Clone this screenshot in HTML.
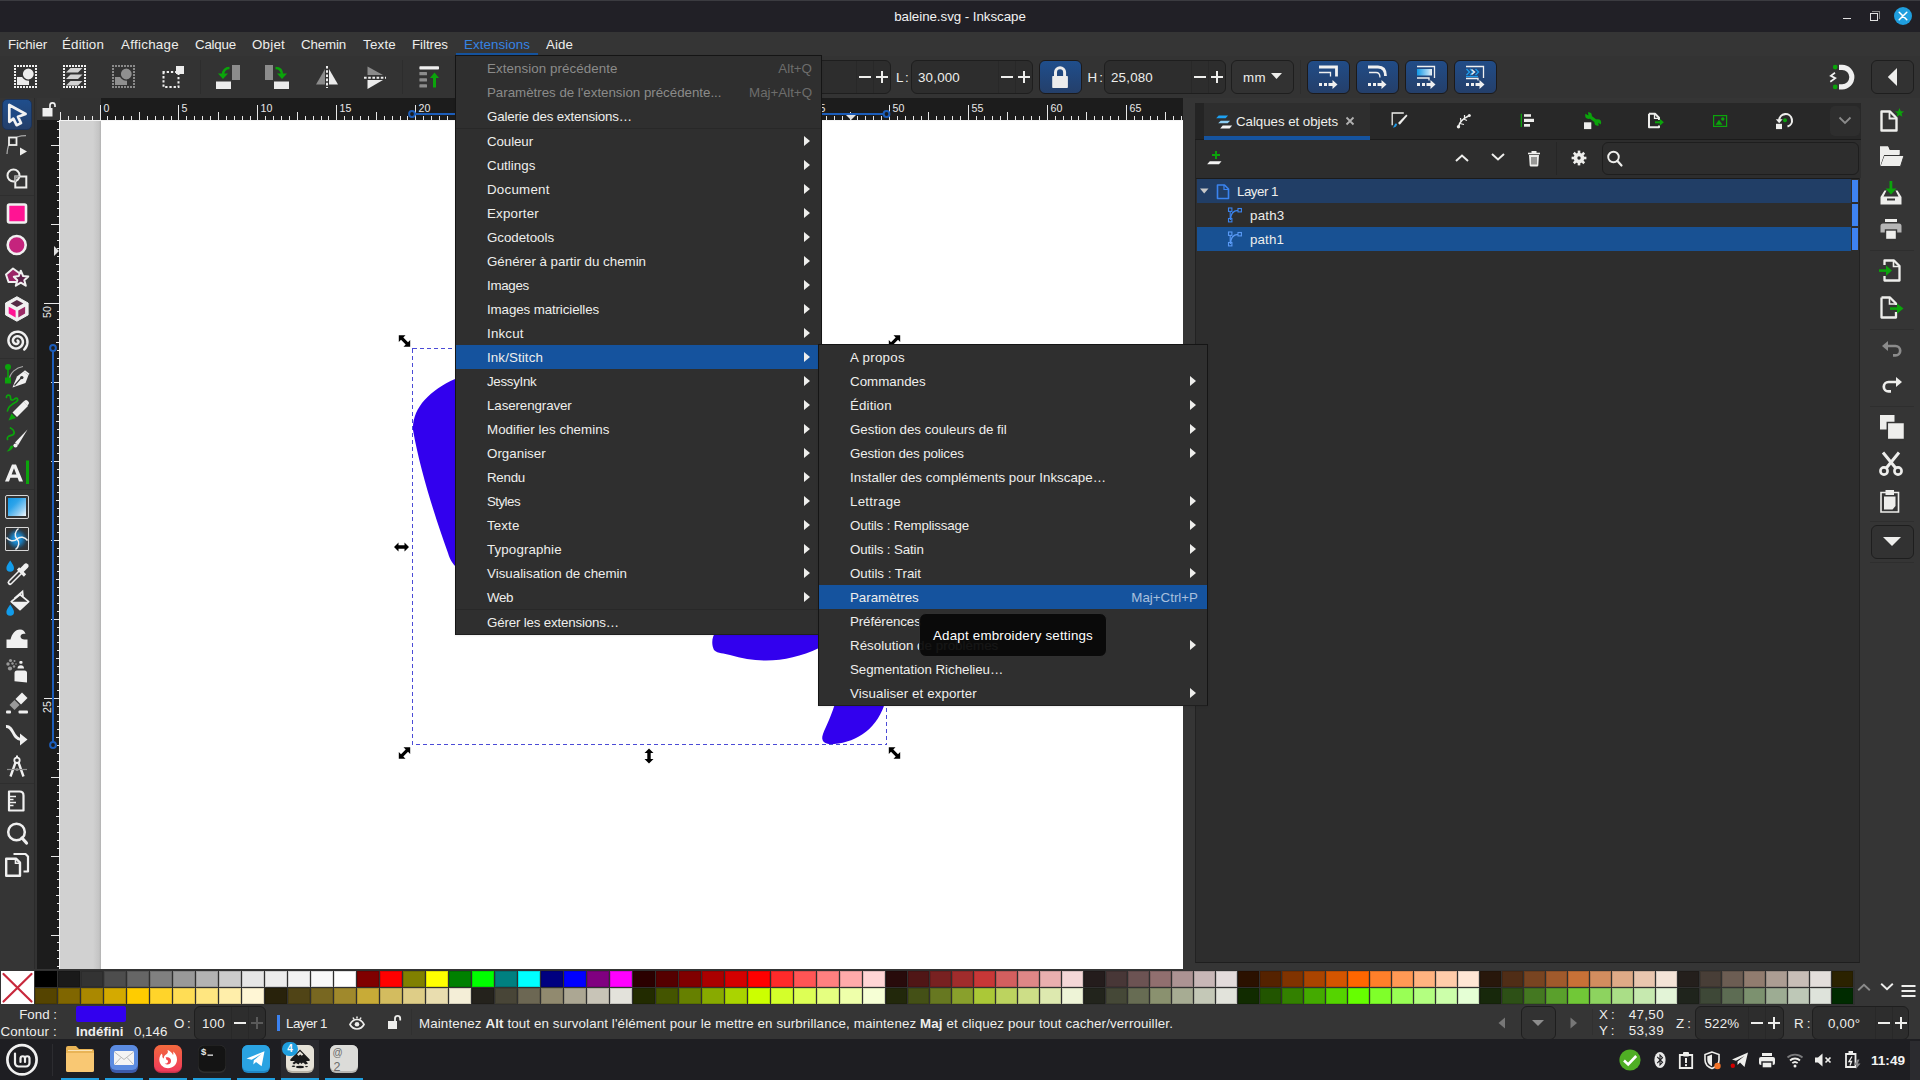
<!DOCTYPE html>
<html><head><meta charset="utf-8"><title>Inkscape</title><style>
*{box-sizing:border-box;margin:0;padding:0}
html,body{width:1920px;height:1080px;overflow:hidden;background:#353535}
body{font-family:"Liberation Sans",sans-serif;font-size:13.33px;color:#eeeeec;position:relative}
.a{position:absolute}
.t{position:absolute;white-space:nowrap;line-height:16px;height:16px;margin-top:1px}
svg{position:absolute;overflow:visible}
.mi{position:absolute;left:0;right:0;height:24px}
.mi .l{position:absolute;left:31px;top:5px;line-height:16px;white-space:nowrap}
.mi .k{position:absolute;right:9px;top:5px;line-height:16px;white-space:nowrap;color:#9a9a99}
.mi .ar{position:absolute;right:11px;top:6.500px;width:0;height:0;border-left:6px solid #eeeeec;border-top:5.500px solid transparent;border-bottom:5.500px solid transparent}
.dis .l{color:#8b8b8a}
.dis .k{color:#6d6d6c}
.sel{background:#15539e}
.sel .k{color:#a9c0dd}
.entry{position:absolute;background:#2d2d2d;border:1px solid #1e1e1e;border-radius:6px}
</style></head><body><div class="a" style="left:0;top:0;width:1920px;height:32px;background:#212026"></div><div class="a" style="left:0;top:0;width:1920px;height:1px;background:#3b3b40"></div><div class="t" style="left:760px;width:400px;text-align:center;top:8px;color:#f2f2f2;letter-spacing:-0.05px">baleine.svg - Inkscape</div><div class="a" style="left:1843px;top:18px;width:8px;height:1px;background:#e0e0e0"></div><div class="a" style="left:1872px;top:11px;width:8px;height:8px;border-top:1px solid #8a8a8a;border-right:1px solid #8a8a8a"></div><div class="a" style="left:1870px;top:13px;width:8px;height:8px;border:1px solid #e0e0e0"></div><div class="a" style="left:1894px;top:7px;width:18px;height:18px;border-radius:9px;background:#1f9ede"></div><svg style="left:1894px;top:7px" width="18" height="18"><path d="M5.200 5.200L12.800 12.800M12.800 5.200L5.200 12.800" stroke="#fff" stroke-width="1.500" stroke-linecap="round"></path></svg><div class="a" style="left:0;top:32px;width:1920px;height:24px;background:#353535"></div><div class="t" style="left: 8px; top: 36px; color: rgb(238, 238, 236); letter-spacing: -0.143px;">Fichier</div><div class="t" style="left: 62px; top: 36px; color: rgb(238, 238, 236); letter-spacing: 0.176px;">Édition</div><div class="t" style="left: 121px; top: 36px; color: rgb(238, 238, 236); letter-spacing: 0.295px;">Affichage</div><div class="t" style="left: 195px; top: 36px; color: rgb(238, 238, 236); letter-spacing: -0.208px;">Calque</div><div class="t" style="left: 252px; top: 36px; color: rgb(238, 238, 236); letter-spacing: 0.228px;">Objet</div><div class="t" style="left: 301px; top: 36px; color: rgb(238, 238, 236); letter-spacing: -0.156px;">Chemin</div><div class="t" style="left: 363px; top: 36px; color: rgb(238, 238, 236); letter-spacing: 0.228px;">Texte</div><div class="t" style="left: 412px; top: 36px; color: rgb(238, 238, 236); letter-spacing: -0.042px;">Filtres</div><div class="t" style="left: 464px; top: 36px; color: rgb(53, 132, 228); letter-spacing: 0.08px;">Extensions</div><div class="t" style="left: 546px; top: 36px; color: rgb(238, 238, 236); letter-spacing: 0.078px;">Aide</div><div class="a" style="left:456px;top:53px;width:82px;height:2px;background:#15539e"></div><div class="a" style="left:0;top:56px;width:1920px;height:42px;background:#333333"></div><svg style="left:13px;top:64px" width="25" height="25"><g stroke="#f0f0f0" stroke-width="2" stroke-dasharray="2 1" shape-rendering="crispEdges"><path d="M1 2H24M1 23H24M2 4V22M23 4V22"></path></g><rect x="4" y="13" width="12" height="8" fill="#ececec"></rect><circle cx="15.300" cy="10" r="6.100" fill="#ececec" stroke="#333333" stroke-width="1.400"></circle></svg><svg style="left:62px;top:64px" width="25" height="25"><g stroke="#f0f0f0" stroke-width="2" stroke-dasharray="2 1" shape-rendering="crispEdges"><path d="M1 2H24M1 23H24M2 4V22M23 4V22"></path></g><g fill="#d2d2d2"><path d="M8.500 4H20.500L16 8.500H4Z"></path><path d="M8.500 10.500H20.500L16 15H4Z"></path><path d="M8.500 17H20.500L16 21.500H4Z"></path></g></svg><svg style="left:111px;top:64px" width="25" height="25"><g stroke="#8a8a8a" stroke-width="2" stroke-dasharray="2 1" shape-rendering="crispEdges"><path d="M1 2H24M1 23H24M2 4V22M23 4V22"></path></g><rect x="4" y="13" width="12" height="8" fill="#909090"></rect><circle cx="15.300" cy="10" r="6.100" fill="#909090" stroke="#333333" stroke-width="1.400"></circle></svg><svg style="left:160px;top:64px" width="26" height="26"><rect x="3.500" y="8" width="15" height="15" fill="none" stroke="#f0f0f0" stroke-width="2" stroke-dasharray="2.300 1.900" stroke-dashoffset="1"></rect><rect x="16" y="2" width="8" height="8" fill="#ececec"></rect></svg><div class="a" style="left:200px;top:60px;width:1px;height:34px;background:#2d2d2d"></div><svg style="left:214px;top:62px" width="28" height="30"><rect x="2" y="19.500" width="15" height="7.500" fill="#ececec"></rect><rect x="18" y="3" width="8" height="15" fill="#8c8c8c"></rect><path d="M15.500 6C11.500 6 9 8.500 9 13" stroke="#0ba40b" stroke-width="2.600" fill="none"></path><path d="M4 11.500H14L9 17Z" fill="#0ba40b"></path></svg><svg style="left:263px;top:62px" width="28" height="30"><rect x="11" y="19.500" width="15" height="7.500" fill="#ececec"></rect><rect x="2" y="3" width="8" height="15" fill="#8c8c8c"></rect><path d="M12.500 6C16.500 6 19 8.500 19 13" stroke="#0ba40b" stroke-width="2.600" fill="none"></path><path d="M14 11.500H24L19 17Z" fill="#0ba40b"></path></svg><svg style="left:314px;top:64px" width="26" height="26"><path d="M11 5L11 20.500L2 20.500Z" fill="#8c8c8c"></path><path d="M15 5L15 20.500L24 20.500Z" fill="#ececec"></path><path d="M13 2V24" stroke="#f0f0f0" stroke-width="2" stroke-dasharray="2.600 1.600"></path></svg><svg style="left:363px;top:64px" width="26" height="26"><path d="M4.500 2.500L4.500 11L20 11Z" fill="#8c8c8c"></path><path d="M4.500 16L20 16L4.500 25Z" fill="#ececec"></path><path d="M1 13.700H23" stroke="#f0f0f0" stroke-width="2" stroke-dasharray="2.600 1.600"></path></svg><div class="a" style="left:402px;top:60px;width:1px;height:34px;background:#2d2d2d"></div><svg style="left:417px;top:64px" width="24" height="26"><rect x="2.400" y="2.200" width="19.600" height="3.300" rx=".8" fill="#f0f0f0"></rect><g fill="#8c8c8c"><rect x="2.400" y="8" width="7.600" height="3.300" rx=".6"></rect><rect x="2.400" y="14.200" width="7.600" height="3.300" rx=".6"></rect><rect x="2.400" y="20.300" width="7.600" height="3.300" rx=".6"></rect></g><rect x="16" y="12" width="3" height="11.500" fill="#0ba40b"></rect><path d="M13 14L17.500 8.500L22 14Z" fill="#0ba40b"></path></svg><div class="entry" style="left:790px;top:60px;width:101px;height:34px"></div><div class="a" style="left:856px;top:61px;width:1px;height:32px;background:#282828"></div><div class="a" style="left:873px;top:61px;width:1px;height:32px;background:#282828"></div><div class="a" style="left:859px;top:76.0px;width:12px;height:2px;background:#eeeeec"></div><div class="a" style="left:876px;top:76.0px;width:12px;height:2px;background:#eeeeec"></div><div class="a" style="left:881px;top:71.0px;width:2px;height:12px;background:#eeeeec"></div><div class="t" style="left:896px;top:69px;word-spacing:-1.500px">L :</div><div class="entry" style="left:911px;top:60px;width:122px;height:34px"></div><div class="t" style="left:918px;top:69.0px;font-size:13.33px;letter-spacing:.2px">30,000</div><div class="a" style="left:998px;top:61px;width:1px;height:32px;background:#282828"></div><div class="a" style="left:1015px;top:61px;width:1px;height:32px;background:#282828"></div><div class="a" style="left:1001px;top:76.0px;width:12px;height:2px;background:#eeeeec"></div><div class="a" style="left:1018px;top:76.0px;width:12px;height:2px;background:#eeeeec"></div><div class="a" style="left:1023px;top:71.0px;width:2px;height:12px;background:#eeeeec"></div><div class="a" style="left:1039px;top:60px;width:43px;height:34px;border-radius:6px;background:linear-gradient(#1f4e8c,#243f6a);border:1px solid #1c1a1a"></div><svg style="left:1050px;top:65px" width="20" height="24"><rect x="2.200" y="11" width="15.700" height="12" rx=".800" fill="#ececec"></rect><path d="M5.500 11V7.200A4.550 4.550 0 0 1 14.600 7.200V11" fill="none" stroke="#ececec" stroke-width="3"></path></svg><div class="t" style="left:1087.500px;top:69px;word-spacing:-1.500px">H :</div><div class="entry" style="left:1104px;top:60px;width:122px;height:34px"></div><div class="t" style="left:1111px;top:69.0px;font-size:13.33px;letter-spacing:.2px">25,080</div><div class="a" style="left:1191px;top:61px;width:1px;height:32px;background:#282828"></div><div class="a" style="left:1208px;top:61px;width:1px;height:32px;background:#282828"></div><div class="a" style="left:1194px;top:76.0px;width:12px;height:2px;background:#eeeeec"></div><div class="a" style="left:1211px;top:76.0px;width:12px;height:2px;background:#eeeeec"></div><div class="a" style="left:1216px;top:71.0px;width:2px;height:12px;background:#eeeeec"></div><div class="entry" style="left:1231px;top:60px;width:63px;height:34px;background:#323232"></div><div class="t" style="left:1243px;top:69px;letter-spacing:.4px">mm</div><svg style="left:1271px;top:73px" width="12" height="7"><path d="M0 0H11L5.500 6Z" fill="#eeeeec"></path></svg><div class="a" style="left:1300px;top:60px;width:1px;height:34px;background:#2d2d2d"></div><div class="a" style="left:1307px;top:60px;width:43px;height:34px;border-radius:6px;background:linear-gradient(#214c87,#243f6a);border:1px solid #1c1a1a"></div><svg style="left:1307px;top:61px" width="43" height="32"><g transform="translate(12 23.500)"><g fill="#f0f0f0"><rect x="0" y="-1.500" width="3" height="3"></rect><rect x="5" y="-1.500" width="3" height="3"></rect><path d="M9.500 -1.500H13.500V-4.500L18.500 0L13.500 4.500V1.500H9.500Z"></path></g></g><path d="M12 6H29.500V15.500" stroke="#f0f0f0" stroke-width="2.800" fill="none"></path><path d="M12 11.500H23.500V15.500" stroke="#f0f0f0" stroke-width="1.300" fill="none"></path></svg><div class="a" style="left:1356px;top:60px;width:43px;height:34px;border-radius:6px;background:linear-gradient(#214c87,#243f6a);border:1px solid #1c1a1a"></div><svg style="left:1356px;top:61px" width="43" height="32"><g transform="translate(12 23.500)"><g fill="#f0f0f0"><rect x="0" y="-1.500" width="3" height="3"></rect><rect x="5" y="-1.500" width="3" height="3"></rect><path d="M9.500 -1.500H13.500V-4.500L18.500 0L13.500 4.500V1.500H9.500Z"></path></g></g><path d="M12 6H22C27 6 29.500 9.500 29.500 15" stroke="#f0f0f0" stroke-width="2.800" fill="none"></path><path d="M13 11.500H20C23 11.500 24 13.500 24 16.500" stroke="#f0f0f0" stroke-width="1.300" fill="none"></path></svg><div class="a" style="left:1405px;top:60px;width:43px;height:34px;border-radius:6px;background:linear-gradient(#214c87,#243f6a);border:1px solid #1c1a1a"></div><svg style="left:1405px;top:61px" width="43" height="32"><g transform="translate(12 23.500)"><g fill="#f0f0f0"><rect x="0" y="-1.500" width="3" height="3"></rect><rect x="5" y="-1.500" width="3" height="3"></rect><path d="M9.500 -1.500H13.500V-4.500L18.500 0L13.500 4.500V1.500H9.500Z"></path></g></g><defs><linearGradient id="gbl" x1="0" x2="1"><stop offset="0" stop-color="#1098e6"></stop><stop offset=".75" stop-color="#a9d8f5"></stop><stop offset="1" stop-color="#f0f0f0"></stop></linearGradient></defs><path d="M12 5.500H29.500V17" stroke="#f0f0f0" stroke-width="1.300" fill="none"></path><rect x="12" y="8" width="15" height="6.500" fill="url(#gbl)"></rect><path d="M12 17H24V19.500" stroke="#f0f0f0" stroke-width="1.300" fill="none"></path></svg><div class="a" style="left:1454px;top:60px;width:43px;height:34px;border-radius:6px;background:linear-gradient(#214c87,#243f6a);border:1px solid #1c1a1a"></div><svg style="left:1454px;top:61px" width="43" height="32"><g transform="translate(12 23.500)"><g fill="#f0f0f0"><rect x="0" y="-1.500" width="3" height="3"></rect><rect x="5" y="-1.500" width="3" height="3"></rect><path d="M9.500 -1.500H13.500V-4.500L18.500 0L13.500 4.500V1.500H9.500Z"></path></g></g><path d="M12 5.500H29.500V17" stroke="#f0f0f0" stroke-width="1.300" fill="none"></path><path d="M12.500 8L15.500 11L12.500 14M16 8L19 11L16 14M21.500 8L24.500 11L21.500 14" stroke="#1e9bea" stroke-width="1.400" fill="none"></path><path d="M17.500 8.500L20.500 11L17.500 13.500" stroke="#f0f0f0" stroke-width="1.400" fill="none"></path><path d="M12 15.500H24" stroke="#1e9bea" stroke-width="1.200"></path><path d="M12 17.500H24V19.500" stroke="#f0f0f0" stroke-width="1.300" fill="none"></path></svg><svg style="left:1826px;top:64px" width="30" height="28"><path d="M13 3.350H16.100A9.750 9.750 0 0 1 16.100 22.850H13" stroke="#f0f0f0" stroke-width="5.100" fill="none"></path><circle cx="9.200" cy="3.100" r="2.400" fill="#0ba40b"></circle><circle cx="9.200" cy="22.900" r="2.400" fill="#0ba40b"></circle><path d="M9 8.800L4.800 11.800L9.300 14.200L4.300 17.700" stroke="#f0f0f0" stroke-width="1.700" fill="none"></path></svg><div class="entry" style="left:1871px;top:60px;width:43px;height:34px;background:#323232"></div><svg style="left:1887px;top:68px" width="11" height="18"><path d="M10 0L0.800 9L10 18Z" fill="#eeeeec"></path></svg><div class="a" style="left:59px;top:120px;width:1124px;height:849px;background:#fff"></div><div class="a" style="left:60px;top:121px;width:41px;height:848px;background:linear-gradient(90deg,#d1d1d1 0,#d1d1d1 33px,#c4c4c4 39px,#b2b2b2 41px)"></div><div class="a" style="left:37px;top:98px;width:1146px;height:22px;background:#1c1c1c"></div><div class="a" style="left:37px;top:98px;width:64px;height:22px;background:#323232"></div><div class="a" style="left:37px;top:120px;width:22px;height:849px;background:#1c1c1c"></div><div class="a" style="left:59px;top:120px;width:1124px;height:1px;background:#f4f4f4"></div><div class="a" style="left:59px;top:120px;width:1px;height:849px;background:#f4f4f4"></div><svg style="left:0;top:98px" width="1183" height="22" shape-rendering="crispEdges"><path d="M60.5 14V22" stroke="#e8e8e8" stroke-width="1"></path><path d="M68.5 18V22" stroke="#e8e8e8" stroke-width="1"></path><path d="M76.5 18V22" stroke="#e8e8e8" stroke-width="1"></path><path d="M84.5 18V22" stroke="#e8e8e8" stroke-width="1"></path><path d="M92.5 18V22" stroke="#e8e8e8" stroke-width="1"></path><path d="M100.5 7V22" stroke="#e8e8e8" stroke-width="1"></path><path d="M107.5 18V22" stroke="#e8e8e8" stroke-width="1"></path><path d="M115.5 18V22" stroke="#e8e8e8" stroke-width="1"></path><path d="M123.5 18V22" stroke="#e8e8e8" stroke-width="1"></path><path d="M131.5 18V22" stroke="#e8e8e8" stroke-width="1"></path><path d="M139.5 14V22" stroke="#e8e8e8" stroke-width="1"></path><path d="M147.5 18V22" stroke="#e8e8e8" stroke-width="1"></path><path d="M155.5 18V22" stroke="#e8e8e8" stroke-width="1"></path><path d="M163.5 18V22" stroke="#e8e8e8" stroke-width="1"></path><path d="M171.5 18V22" stroke="#e8e8e8" stroke-width="1"></path><path d="M178.5 7V22" stroke="#e8e8e8" stroke-width="1"></path><path d="M186.5 18V22" stroke="#e8e8e8" stroke-width="1"></path><path d="M194.5 18V22" stroke="#e8e8e8" stroke-width="1"></path><path d="M202.5 18V22" stroke="#e8e8e8" stroke-width="1"></path><path d="M210.5 18V22" stroke="#e8e8e8" stroke-width="1"></path><path d="M218.5 14V22" stroke="#e8e8e8" stroke-width="1"></path><path d="M226.5 18V22" stroke="#e8e8e8" stroke-width="1"></path><path d="M234.5 18V22" stroke="#e8e8e8" stroke-width="1"></path><path d="M242.5 18V22" stroke="#e8e8e8" stroke-width="1"></path><path d="M250.5 18V22" stroke="#e8e8e8" stroke-width="1"></path><path d="M257.5 7V22" stroke="#e8e8e8" stroke-width="1"></path><path d="M265.5 18V22" stroke="#e8e8e8" stroke-width="1"></path><path d="M273.5 18V22" stroke="#e8e8e8" stroke-width="1"></path><path d="M281.5 18V22" stroke="#e8e8e8" stroke-width="1"></path><path d="M289.5 18V22" stroke="#e8e8e8" stroke-width="1"></path><path d="M297.5 14V22" stroke="#e8e8e8" stroke-width="1"></path><path d="M305.5 18V22" stroke="#e8e8e8" stroke-width="1"></path><path d="M313.5 18V22" stroke="#e8e8e8" stroke-width="1"></path><path d="M321.5 18V22" stroke="#e8e8e8" stroke-width="1"></path><path d="M328.5 18V22" stroke="#e8e8e8" stroke-width="1"></path><path d="M336.5 7V22" stroke="#e8e8e8" stroke-width="1"></path><path d="M344.5 18V22" stroke="#e8e8e8" stroke-width="1"></path><path d="M352.5 18V22" stroke="#e8e8e8" stroke-width="1"></path><path d="M360.5 18V22" stroke="#e8e8e8" stroke-width="1"></path><path d="M368.5 18V22" stroke="#e8e8e8" stroke-width="1"></path><path d="M376.5 14V22" stroke="#e8e8e8" stroke-width="1"></path><path d="M384.5 18V22" stroke="#e8e8e8" stroke-width="1"></path><path d="M392.5 18V22" stroke="#e8e8e8" stroke-width="1"></path><path d="M400.5 18V22" stroke="#e8e8e8" stroke-width="1"></path><path d="M407.5 18V22" stroke="#e8e8e8" stroke-width="1"></path><path d="M415.5 7V22" stroke="#e8e8e8" stroke-width="1"></path><path d="M423.5 18V22" stroke="#e8e8e8" stroke-width="1"></path><path d="M431.5 18V22" stroke="#e8e8e8" stroke-width="1"></path><path d="M439.5 18V22" stroke="#e8e8e8" stroke-width="1"></path><path d="M447.5 18V22" stroke="#e8e8e8" stroke-width="1"></path><path d="M455.5 14V22" stroke="#e8e8e8" stroke-width="1"></path><path d="M463.5 18V22" stroke="#e8e8e8" stroke-width="1"></path><path d="M471.5 18V22" stroke="#e8e8e8" stroke-width="1"></path><path d="M478.5 18V22" stroke="#e8e8e8" stroke-width="1"></path><path d="M486.5 18V22" stroke="#e8e8e8" stroke-width="1"></path><path d="M494.5 7V22" stroke="#e8e8e8" stroke-width="1"></path><path d="M502.5 18V22" stroke="#e8e8e8" stroke-width="1"></path><path d="M510.5 18V22" stroke="#e8e8e8" stroke-width="1"></path><path d="M518.5 18V22" stroke="#e8e8e8" stroke-width="1"></path><path d="M526.5 18V22" stroke="#e8e8e8" stroke-width="1"></path><path d="M534.5 14V22" stroke="#e8e8e8" stroke-width="1"></path><path d="M542.5 18V22" stroke="#e8e8e8" stroke-width="1"></path><path d="M550.5 18V22" stroke="#e8e8e8" stroke-width="1"></path><path d="M557.5 18V22" stroke="#e8e8e8" stroke-width="1"></path><path d="M565.5 18V22" stroke="#e8e8e8" stroke-width="1"></path><path d="M573.5 7V22" stroke="#e8e8e8" stroke-width="1"></path><path d="M581.5 18V22" stroke="#e8e8e8" stroke-width="1"></path><path d="M589.5 18V22" stroke="#e8e8e8" stroke-width="1"></path><path d="M597.5 18V22" stroke="#e8e8e8" stroke-width="1"></path><path d="M605.5 18V22" stroke="#e8e8e8" stroke-width="1"></path><path d="M613.5 14V22" stroke="#e8e8e8" stroke-width="1"></path><path d="M621.5 18V22" stroke="#e8e8e8" stroke-width="1"></path><path d="M628.5 18V22" stroke="#e8e8e8" stroke-width="1"></path><path d="M636.5 18V22" stroke="#e8e8e8" stroke-width="1"></path><path d="M644.5 18V22" stroke="#e8e8e8" stroke-width="1"></path><path d="M652.5 7V22" stroke="#e8e8e8" stroke-width="1"></path><path d="M660.5 18V22" stroke="#e8e8e8" stroke-width="1"></path><path d="M668.5 18V22" stroke="#e8e8e8" stroke-width="1"></path><path d="M676.5 18V22" stroke="#e8e8e8" stroke-width="1"></path><path d="M684.5 18V22" stroke="#e8e8e8" stroke-width="1"></path><path d="M692.5 14V22" stroke="#e8e8e8" stroke-width="1"></path><path d="M700.5 18V22" stroke="#e8e8e8" stroke-width="1"></path><path d="M707.5 18V22" stroke="#e8e8e8" stroke-width="1"></path><path d="M715.5 18V22" stroke="#e8e8e8" stroke-width="1"></path><path d="M723.5 18V22" stroke="#e8e8e8" stroke-width="1"></path><path d="M731.5 7V22" stroke="#e8e8e8" stroke-width="1"></path><path d="M739.5 18V22" stroke="#e8e8e8" stroke-width="1"></path><path d="M747.5 18V22" stroke="#e8e8e8" stroke-width="1"></path><path d="M755.5 18V22" stroke="#e8e8e8" stroke-width="1"></path><path d="M763.5 18V22" stroke="#e8e8e8" stroke-width="1"></path><path d="M771.5 14V22" stroke="#e8e8e8" stroke-width="1"></path><path d="M778.5 18V22" stroke="#e8e8e8" stroke-width="1"></path><path d="M786.5 18V22" stroke="#e8e8e8" stroke-width="1"></path><path d="M794.5 18V22" stroke="#e8e8e8" stroke-width="1"></path><path d="M802.5 18V22" stroke="#e8e8e8" stroke-width="1"></path><path d="M810.5 7V22" stroke="#e8e8e8" stroke-width="1"></path><path d="M818.5 18V22" stroke="#e8e8e8" stroke-width="1"></path><path d="M826.5 18V22" stroke="#e8e8e8" stroke-width="1"></path><path d="M834.5 18V22" stroke="#e8e8e8" stroke-width="1"></path><path d="M842.5 18V22" stroke="#e8e8e8" stroke-width="1"></path><path d="M850.5 14V22" stroke="#e8e8e8" stroke-width="1"></path><path d="M857.5 18V22" stroke="#e8e8e8" stroke-width="1"></path><path d="M865.5 18V22" stroke="#e8e8e8" stroke-width="1"></path><path d="M873.5 18V22" stroke="#e8e8e8" stroke-width="1"></path><path d="M881.5 18V22" stroke="#e8e8e8" stroke-width="1"></path><path d="M889.5 7V22" stroke="#e8e8e8" stroke-width="1"></path><path d="M897.5 18V22" stroke="#e8e8e8" stroke-width="1"></path><path d="M905.5 18V22" stroke="#e8e8e8" stroke-width="1"></path><path d="M913.5 18V22" stroke="#e8e8e8" stroke-width="1"></path><path d="M921.5 18V22" stroke="#e8e8e8" stroke-width="1"></path><path d="M928.5 14V22" stroke="#e8e8e8" stroke-width="1"></path><path d="M936.5 18V22" stroke="#e8e8e8" stroke-width="1"></path><path d="M944.5 18V22" stroke="#e8e8e8" stroke-width="1"></path><path d="M952.5 18V22" stroke="#e8e8e8" stroke-width="1"></path><path d="M960.5 18V22" stroke="#e8e8e8" stroke-width="1"></path><path d="M968.5 7V22" stroke="#e8e8e8" stroke-width="1"></path><path d="M976.5 18V22" stroke="#e8e8e8" stroke-width="1"></path><path d="M984.5 18V22" stroke="#e8e8e8" stroke-width="1"></path><path d="M992.5 18V22" stroke="#e8e8e8" stroke-width="1"></path><path d="M1000.5 18V22" stroke="#e8e8e8" stroke-width="1"></path><path d="M1007.5 14V22" stroke="#e8e8e8" stroke-width="1"></path><path d="M1015.5 18V22" stroke="#e8e8e8" stroke-width="1"></path><path d="M1023.5 18V22" stroke="#e8e8e8" stroke-width="1"></path><path d="M1031.5 18V22" stroke="#e8e8e8" stroke-width="1"></path><path d="M1039.5 18V22" stroke="#e8e8e8" stroke-width="1"></path><path d="M1047.5 7V22" stroke="#e8e8e8" stroke-width="1"></path><path d="M1055.5 18V22" stroke="#e8e8e8" stroke-width="1"></path><path d="M1063.5 18V22" stroke="#e8e8e8" stroke-width="1"></path><path d="M1071.5 18V22" stroke="#e8e8e8" stroke-width="1"></path><path d="M1078.5 18V22" stroke="#e8e8e8" stroke-width="1"></path><path d="M1086.5 14V22" stroke="#e8e8e8" stroke-width="1"></path><path d="M1094.5 18V22" stroke="#e8e8e8" stroke-width="1"></path><path d="M1102.5 18V22" stroke="#e8e8e8" stroke-width="1"></path><path d="M1110.5 18V22" stroke="#e8e8e8" stroke-width="1"></path><path d="M1118.5 18V22" stroke="#e8e8e8" stroke-width="1"></path><path d="M1126.5 7V22" stroke="#e8e8e8" stroke-width="1"></path><path d="M1134.5 18V22" stroke="#e8e8e8" stroke-width="1"></path><path d="M1142.5 18V22" stroke="#e8e8e8" stroke-width="1"></path><path d="M1150.5 18V22" stroke="#e8e8e8" stroke-width="1"></path><path d="M1157.5 18V22" stroke="#e8e8e8" stroke-width="1"></path><path d="M1165.5 14V22" stroke="#e8e8e8" stroke-width="1"></path><path d="M1173.5 18V22" stroke="#e8e8e8" stroke-width="1"></path><path d="M1181.5 18V22" stroke="#e8e8e8" stroke-width="1"></path></svg><div class="t" style="left:103.5px;top:99px;font-size:10.600px;color:#e8e8e8">0</div><div class="t" style="left:181.5px;top:99px;font-size:10.600px;color:#e8e8e8">5</div><div class="t" style="left:260.5px;top:99px;font-size:10.600px;color:#e8e8e8">10</div><div class="t" style="left:339.5px;top:99px;font-size:10.600px;color:#e8e8e8">15</div><div class="t" style="left:418.5px;top:99px;font-size:10.600px;color:#e8e8e8">20</div><div class="t" style="left:497.5px;top:99px;font-size:10.600px;color:#e8e8e8">25</div><div class="t" style="left:576.5px;top:99px;font-size:10.600px;color:#e8e8e8">30</div><div class="t" style="left:655.5px;top:99px;font-size:10.600px;color:#e8e8e8">35</div><div class="t" style="left:734.5px;top:99px;font-size:10.600px;color:#e8e8e8">40</div><div class="t" style="left:813.5px;top:99px;font-size:10.600px;color:#e8e8e8">45</div><div class="t" style="left:892.5px;top:99px;font-size:10.600px;color:#e8e8e8">50</div><div class="t" style="left:971.5px;top:99px;font-size:10.600px;color:#e8e8e8">55</div><div class="t" style="left:1050.5px;top:99px;font-size:10.600px;color:#e8e8e8">60</div><div class="t" style="left:1129.5px;top:99px;font-size:10.600px;color:#e8e8e8">65</div><svg style="left:37px;top:0" width="22" height="969" shape-rendering="crispEdges"><path d="M20 966.5H22" stroke="#e8e8e8" stroke-width="1"></path><path d="M20 958.5H22" stroke="#e8e8e8" stroke-width="1"></path><path d="M20 950.5H22" stroke="#e8e8e8" stroke-width="1"></path><path d="M20 942.5H22" stroke="#e8e8e8" stroke-width="1"></path><path d="M14 935.5H22" stroke="#e8e8e8" stroke-width="1"></path><path d="M20 927.5H22" stroke="#e8e8e8" stroke-width="1"></path><path d="M20 919.5H22" stroke="#e8e8e8" stroke-width="1"></path><path d="M20 911.5H22" stroke="#e8e8e8" stroke-width="1"></path><path d="M20 903.5H22" stroke="#e8e8e8" stroke-width="1"></path><path d="M19 895.5H22" stroke="#e8e8e8" stroke-width="1"></path><path d="M20 887.5H22" stroke="#e8e8e8" stroke-width="1"></path><path d="M20 879.5H22" stroke="#e8e8e8" stroke-width="1"></path><path d="M20 871.5H22" stroke="#e8e8e8" stroke-width="1"></path><path d="M20 864.5H22" stroke="#e8e8e8" stroke-width="1"></path><path d="M14 856.5H22" stroke="#e8e8e8" stroke-width="1"></path><path d="M20 848.5H22" stroke="#e8e8e8" stroke-width="1"></path><path d="M20 840.5H22" stroke="#e8e8e8" stroke-width="1"></path><path d="M20 832.5H22" stroke="#e8e8e8" stroke-width="1"></path><path d="M20 824.5H22" stroke="#e8e8e8" stroke-width="1"></path><path d="M19 816.5H22" stroke="#e8e8e8" stroke-width="1"></path><path d="M20 808.5H22" stroke="#e8e8e8" stroke-width="1"></path><path d="M20 800.5H22" stroke="#e8e8e8" stroke-width="1"></path><path d="M20 792.5H22" stroke="#e8e8e8" stroke-width="1"></path><path d="M20 785.5H22" stroke="#e8e8e8" stroke-width="1"></path><path d="M14 777.5H22" stroke="#e8e8e8" stroke-width="1"></path><path d="M20 769.5H22" stroke="#e8e8e8" stroke-width="1"></path><path d="M20 761.5H22" stroke="#e8e8e8" stroke-width="1"></path><path d="M20 753.5H22" stroke="#e8e8e8" stroke-width="1"></path><path d="M20 745.5H22" stroke="#e8e8e8" stroke-width="1"></path><path d="M19 737.5H22" stroke="#e8e8e8" stroke-width="1"></path><path d="M20 729.5H22" stroke="#e8e8e8" stroke-width="1"></path><path d="M20 721.5H22" stroke="#e8e8e8" stroke-width="1"></path><path d="M20 714.5H22" stroke="#e8e8e8" stroke-width="1"></path><path d="M20 706.5H22" stroke="#e8e8e8" stroke-width="1"></path><path d="M7 698.5H22" stroke="#e8e8e8" stroke-width="1"></path><path d="M20 690.5H22" stroke="#e8e8e8" stroke-width="1"></path><path d="M20 682.5H22" stroke="#e8e8e8" stroke-width="1"></path><path d="M20 674.5H22" stroke="#e8e8e8" stroke-width="1"></path><path d="M20 666.5H22" stroke="#e8e8e8" stroke-width="1"></path><path d="M19 658.5H22" stroke="#e8e8e8" stroke-width="1"></path><path d="M20 650.5H22" stroke="#e8e8e8" stroke-width="1"></path><path d="M20 642.5H22" stroke="#e8e8e8" stroke-width="1"></path><path d="M20 635.5H22" stroke="#e8e8e8" stroke-width="1"></path><path d="M20 627.5H22" stroke="#e8e8e8" stroke-width="1"></path><path d="M14 619.5H22" stroke="#e8e8e8" stroke-width="1"></path><path d="M20 611.5H22" stroke="#e8e8e8" stroke-width="1"></path><path d="M20 603.5H22" stroke="#e8e8e8" stroke-width="1"></path><path d="M20 595.5H22" stroke="#e8e8e8" stroke-width="1"></path><path d="M20 587.5H22" stroke="#e8e8e8" stroke-width="1"></path><path d="M19 579.5H22" stroke="#e8e8e8" stroke-width="1"></path><path d="M20 571.5H22" stroke="#e8e8e8" stroke-width="1"></path><path d="M20 564.5H22" stroke="#e8e8e8" stroke-width="1"></path><path d="M20 556.5H22" stroke="#e8e8e8" stroke-width="1"></path><path d="M20 548.5H22" stroke="#e8e8e8" stroke-width="1"></path><path d="M14 540.5H22" stroke="#e8e8e8" stroke-width="1"></path><path d="M20 532.5H22" stroke="#e8e8e8" stroke-width="1"></path><path d="M20 524.5H22" stroke="#e8e8e8" stroke-width="1"></path><path d="M20 516.5H22" stroke="#e8e8e8" stroke-width="1"></path><path d="M20 508.5H22" stroke="#e8e8e8" stroke-width="1"></path><path d="M19 500.5H22" stroke="#e8e8e8" stroke-width="1"></path><path d="M20 492.5H22" stroke="#e8e8e8" stroke-width="1"></path><path d="M20 485.5H22" stroke="#e8e8e8" stroke-width="1"></path><path d="M20 477.5H22" stroke="#e8e8e8" stroke-width="1"></path><path d="M20 469.5H22" stroke="#e8e8e8" stroke-width="1"></path><path d="M14 461.5H22" stroke="#e8e8e8" stroke-width="1"></path><path d="M20 453.5H22" stroke="#e8e8e8" stroke-width="1"></path><path d="M20 445.5H22" stroke="#e8e8e8" stroke-width="1"></path><path d="M20 437.5H22" stroke="#e8e8e8" stroke-width="1"></path><path d="M20 429.5H22" stroke="#e8e8e8" stroke-width="1"></path><path d="M19 421.5H22" stroke="#e8e8e8" stroke-width="1"></path><path d="M20 414.5H22" stroke="#e8e8e8" stroke-width="1"></path><path d="M20 406.5H22" stroke="#e8e8e8" stroke-width="1"></path><path d="M20 398.5H22" stroke="#e8e8e8" stroke-width="1"></path><path d="M20 390.5H22" stroke="#e8e8e8" stroke-width="1"></path><path d="M14 382.5H22" stroke="#e8e8e8" stroke-width="1"></path><path d="M20 374.5H22" stroke="#e8e8e8" stroke-width="1"></path><path d="M20 366.5H22" stroke="#e8e8e8" stroke-width="1"></path><path d="M20 358.5H22" stroke="#e8e8e8" stroke-width="1"></path><path d="M20 350.5H22" stroke="#e8e8e8" stroke-width="1"></path><path d="M19 342.5H22" stroke="#e8e8e8" stroke-width="1"></path><path d="M20 335.5H22" stroke="#e8e8e8" stroke-width="1"></path><path d="M20 327.5H22" stroke="#e8e8e8" stroke-width="1"></path><path d="M20 319.5H22" stroke="#e8e8e8" stroke-width="1"></path><path d="M20 311.5H22" stroke="#e8e8e8" stroke-width="1"></path><path d="M7 303.5H22" stroke="#e8e8e8" stroke-width="1"></path><path d="M20 295.5H22" stroke="#e8e8e8" stroke-width="1"></path><path d="M20 287.5H22" stroke="#e8e8e8" stroke-width="1"></path><path d="M20 279.5H22" stroke="#e8e8e8" stroke-width="1"></path><path d="M20 271.5H22" stroke="#e8e8e8" stroke-width="1"></path><path d="M19 264.5H22" stroke="#e8e8e8" stroke-width="1"></path><path d="M20 256.5H22" stroke="#e8e8e8" stroke-width="1"></path><path d="M20 248.5H22" stroke="#e8e8e8" stroke-width="1"></path><path d="M20 240.5H22" stroke="#e8e8e8" stroke-width="1"></path><path d="M20 232.5H22" stroke="#e8e8e8" stroke-width="1"></path><path d="M14 224.5H22" stroke="#e8e8e8" stroke-width="1"></path><path d="M20 216.5H22" stroke="#e8e8e8" stroke-width="1"></path><path d="M20 208.5H22" stroke="#e8e8e8" stroke-width="1"></path><path d="M20 200.5H22" stroke="#e8e8e8" stroke-width="1"></path><path d="M20 192.5H22" stroke="#e8e8e8" stroke-width="1"></path><path d="M19 185.5H22" stroke="#e8e8e8" stroke-width="1"></path><path d="M20 177.5H22" stroke="#e8e8e8" stroke-width="1"></path><path d="M20 169.5H22" stroke="#e8e8e8" stroke-width="1"></path><path d="M20 161.5H22" stroke="#e8e8e8" stroke-width="1"></path><path d="M20 153.5H22" stroke="#e8e8e8" stroke-width="1"></path><path d="M14 145.5H22" stroke="#e8e8e8" stroke-width="1"></path><path d="M20 137.5H22" stroke="#e8e8e8" stroke-width="1"></path><path d="M20 129.5H22" stroke="#e8e8e8" stroke-width="1"></path><path d="M20 121.5H22" stroke="#e8e8e8" stroke-width="1"></path></svg><div class="a" style="left:41px;top:306.0px;width:12px;height:14px;line-height:12px;writing-mode:vertical-rl;transform:rotate(180deg);font-size:10.6px;color:#e8e8e8;white-space:nowrap;text-align:right">50</div><div class="a" style="left:41px;top:701.0px;width:12px;height:14px;line-height:12px;writing-mode:vertical-rl;transform:rotate(180deg);font-size:10.6px;color:#e8e8e8;white-space:nowrap;text-align:right">25</div><svg style="left:54px;top:246px" width="6" height="10"><path d="M0 0L5 5L0 10Z" fill="#e0e0e0"></path></svg><svg style="left:846px;top:115px" width="10" height="6"><path d="M0 0L10 0L5 5Z" fill="#e0e0e0"></path></svg><svg style="left:0;top:0" width="1183" height="968"><g stroke="#1c5dba" stroke-width="2" fill="#1c1c1c"><path d="M412 114H886"></path><circle cx="412" cy="114" r="2.900"></circle><circle cx="886.500" cy="114" r="2.900"></circle><path d="M53 348V745"></path><circle cx="53" cy="348" r="2.900"></circle><circle cx="53" cy="745" r="2.900"></circle></g></svg><svg style="left:0;top:0" width="1183" height="968"><path d="M455 379 C430 390 412 408 413 430 C420 470 436 520 448 553 C450 560 453 564 456 567 L600 620 L820 560 L820 379 Z" fill="#3200ee"></path><path d="M716 632 C712 636 711 644 714 650 C718 654 724 653 730 655 C760 664 790 662 819 648 L819 632 Z" fill="#3200ee"></path><path d="M836 700 C832 715 826 726 823 734 C820 742 826 745 834 744 C858 742 878 728 886 700 Z" fill="#3200ee"></path><rect x="412.5" y="348.5" width="474" height="396" fill="none" stroke="#4b4bd6" stroke-width="1" stroke-dasharray="4 3" shape-rendering="crispEdges"></rect><g transform="translate(404.5 341) scale(1 1)"><path d="M-5.700 -5.700 L1 -5.700 L-1.200 -3.500 L3.500 1.200 L5.700 -1 L5.700 5.700 L-1 5.700 L1.200 3.500 L-3.500 -1.200 L-5.700 1 Z" fill="#000"></path></g><g transform="translate(894.5 341) scale(-1 1)"><path d="M-5.700 -5.700 L1 -5.700 L-1.200 -3.500 L3.500 1.200 L5.700 -1 L5.700 5.700 L-1 5.700 L1.200 3.500 L-3.500 -1.200 L-5.700 1 Z" fill="#000"></path></g><g transform="translate(404.5 753) scale(-1 1)"><path d="M-5.700 -5.700 L1 -5.700 L-1.200 -3.500 L3.500 1.200 L5.700 -1 L5.700 5.700 L-1 5.700 L1.200 3.500 L-3.500 -1.200 L-5.700 1 Z" fill="#000"></path></g><g transform="translate(894.5 753) scale(1 1)"><path d="M-5.700 -5.700 L1 -5.700 L-1.200 -3.500 L3.500 1.200 L5.700 -1 L5.700 5.700 L-1 5.700 L1.200 3.500 L-3.500 -1.200 L-5.700 1 Z" fill="#000"></path></g><g transform="translate(401.5 547)"><path d="M-7.500 0 L-3 -4.500 L-3 -1.700 L3 -1.700 L3 -4.500 L7.500 0 L3 4.500 L3 1.700 L-3 1.700 L-3 4.500 Z" fill="#000"></path></g><g transform="translate(649 756) rotate(90)"><path d="M-7.500 0 L-3 -4.500 L-3 -1.700 L3 -1.700 L3 -4.500 L7.500 0 L3 4.500 L3 1.700 L-3 1.700 L-3 4.500 Z" fill="#000"></path></g></svg><div class="a" style="left:1183px;top:98px;width:737px;height:872px;background:#353535"></div><div class="a" style="left:0;top:98px;width:35px;height:872px;background:#353535"></div><div class="a" style="left:34px;top:98px;width:1px;height:871px;background:#2b2b2b"></div><div class="a" style="left:35px;top:98px;width:2px;height:871px;background:#333"></div><div class="a" style="left:2px;top:98.800px;width:30.300px;height:30.800px;border-radius:5px;background:linear-gradient(#1f4e8c,#243f6a);border:1px solid #1b335a"></div><svg style="left:0px;top:96px" width="36" height="36"><path d="M9.300 9V25.800L13.400 22.700L16.600 29.200L21 27.100L18 20.800L25.600 18Z" fill="#1f4984" stroke="#f2f2f2" stroke-width="2.700" stroke-linejoin="round"></path></svg><svg style="left:0px;top:126px" width="36" height="32"><path d="M7 28C7.5 20 9.5 17 11 16" stroke="#a8a8a8" stroke-width="1.3" fill="none"></path><path d="M17 11C20 10 23 9.6 26 9.6" stroke="#a8a8a8" stroke-width="1.3" fill="none"></path><rect x="9" y="11.5" width="7.5" height="7.5" fill="#353535" stroke="#eeeeec" stroke-width="1.8"></rect><rect x="11.5" y="14" width="2.5" height="2.5" fill="#222"></rect><path d="M20 21.5L27 25.5L20 29.5Z" fill="#eeeeec"></path></svg><svg style="left:0px;top:162px" width="36" height="32"><circle cx="13.5" cy="13.5" r="6" fill="none" stroke="#eeeeec" stroke-width="2"></circle><rect x="15.300" y="14.500" width="11" height="11" fill="none" stroke="#eeeeec" stroke-width="2"></rect><path d="M15.300 19.500V14.500H19.500" stroke="#9a9a9a" stroke-width="1.600" fill="none"></path></svg><div class="a" style="left:0;top:195px;width:34px;height:1px;background:#2e2e2e"></div><svg style="left:0px;top:196px" width="36" height="34"><rect x="8" y="8.5" width="18" height="18" rx="1.5" fill="#ff1493" stroke="#f0f0f0" stroke-width="2.6"></rect></svg><svg style="left:0px;top:229px" width="36" height="32"><circle cx="16.7" cy="16" r="9" fill="#c5247d" stroke="#f0f0f0" stroke-width="2.6"></circle></svg><svg style="left:0px;top:261px" width="36" height="32"><path d="M13 7.5L20.5 13L18 21H8.5L6 13.5Z" fill="#9c2568" stroke="#f0f0f0" stroke-width="2" stroke-linejoin="round"></path><path d="M20.5 13L22.8 18.3L28 18.8L24 22.5L25.5 28L20.5 25L15.5 28L17 22.5L13.5 19L18.5 18.3Z" fill="#5c2249" stroke="#f0f0f0" stroke-width="2" stroke-linejoin="round" transform="translate(0.300 -3.300)"></path></svg><svg style="left:0px;top:293px" width="36" height="32"><path d="M16.900 3.700L28.100 10V21.900L16.900 28.200L5.600 21.900V10Z" fill="#f0f0f0" stroke="#f0f0f0" stroke-width="1" stroke-linejoin="round"></path><path d="M16.900 6.900L23.300 10.600L16.900 14.100L10.700 10.600Z" fill="#552a45"></path><path d="M8.700 13.800L15.600 17.500V24.400L8.700 20.600Z" fill="#ff1493"></path><path d="M25.100 13.800L18.300 17.500V24.400L25.100 20.600Z" fill="#9c2b66"></path></svg><svg style="left:0px;top:325px" width="36" height="32"><path d="M17.54 15.53 L17.73 15.59 L17.92 15.70 L18.09 15.85 L18.25 16.05 L18.36 16.28 L18.44 16.55 L18.47 16.84 L18.45 17.15 L18.37 17.47 L18.23 17.79 L18.02 18.08 L17.76 18.36 L17.44 18.59 L17.07 18.77 L16.66 18.90 L16.22 18.95 L15.75 18.93 L15.28 18.83 L14.82 18.65 L14.37 18.39 L13.97 18.04 L13.61 17.62 L13.32 17.13 L13.10 16.59 L12.97 16.00 L12.94 15.38 L13.01 14.75 L13.19 14.11 L13.47 13.50 L13.86 12.93 L14.34 12.41 L14.92 11.97 L15.57 11.62 L16.29 11.37 L17.06 11.24 L17.86 11.23 L18.66 11.35 L19.45 11.60 L20.21 11.99 L20.91 12.50 L21.54 13.12 L22.06 13.86 L22.47 14.68 L22.75 15.57 L22.89 16.52 L22.88 17.49 L22.71 18.47 L22.38 19.42 L21.89 20.32 L21.26 21.15 L20.49 21.89 L19.60 22.50 L18.61 22.97 L17.54 23.28 L16.42 23.42 L15.27 23.39 L14.13 23.16 L13.01 22.76 L11.96 22.17 L11.00 21.42 L10.16 20.51 L9.47 19.46 L8.94 18.31 L8.59 17.06 L8.44 15.76 L8.51 14.44 L8.78 13.12 L9.26 11.85 L9.95 10.65 L10.82 9.56 L11.87 8.61 L13.07 7.83 L14.40 7.24 L15.82 6.86 L17.30 6.71 L18.80 6.80 L20.29 7.12 L21.72 7.68 L23.06 8.46 L24.28 9.46 L25.34 10.66 L26.20 12.01 L26.85 13.51 L27.26 15.10 L27.42 16.76 L27.31 18.43 L26.94 20.09 L26.30 21.69 L25.42 23.18 L24.29 24.52" fill="none" stroke="#f0f0f0" stroke-width="2.500" stroke-linecap="round"></path></svg><div class="a" style="left:0;top:358px;width:34px;height:1px;background:#2e2e2e"></div><svg style="left:0px;top:358px" width="36" height="34"><path d="M9.5 21C10 15 16 9.5 23 8.5" stroke="#a8a8a8" stroke-width="1.2" fill="none"></path><circle cx="8" cy="9" r="3" fill="#0ba40b"></circle><path d="M8 9V20" stroke="#0ba40b" stroke-width="1.6"></path><rect x="5" y="19.5" width="6" height="6" fill="#0ba40b"></rect><path d="M12.5 29.5L17 18.5L23.5 13.5L28.5 17L25.5 25Z" fill="#f0f0f0"></path><path d="M23.5 13.5L25 12.2L29.5 15.8L28.5 17Z" fill="#f0f0f0"></path><path d="M14.5 27.5L21.5 19.5" stroke="#353535" stroke-width="1.2"></path><circle cx="21.8" cy="19.6" r="1.7" fill="#353535"></circle></svg><svg style="left:0px;top:390.5px" width="36" height="32"><path d="M6.5 6.5C6 3.5 10.5 3 10.5 6.5C10.5 10 13 9.5 14.5 8C17.5 5.5 19 9 16 11C11 13.5 8 16 7.5 20" stroke="#0ba40b" stroke-width="1.7" fill="none" stroke-linecap="round"></path><path d="M12.5 21.5L23.5 10.5L28 15L17 26Z" fill="#f0f0f0"></path><path d="M24.5 9.5L25.8 8.2A1.8 1.8 0 0 1 28.3 8.2L29.5 9.5A1.8 1.8 0 0 1 29.5 12L28.5 13.5Z" fill="#f0f0f0" transform="translate(-1 1.3)"></path><path d="M11.5 22.5L16 27L8.5 29.5Z" fill="#0ba40b"></path></svg><svg style="left:0px;top:421.5px" width="36" height="32"><path d="M10.5 6C14 7.5 15.5 11.5 12.5 13C9 14 6.5 14.5 7.5 17.5" stroke="#0ba40b" stroke-width="1.7" fill="none" stroke-linecap="round"></path><path d="M15 20.5L27.5 7.5L18 23.2Z" fill="#f0f0f0"></path><circle cx="15.5" cy="23.5" r="2.1" fill="#f0f0f0"></circle><path d="M13.5 24.5C12 28 9.5 29.5 6.5 29.5C8.5 28 9.5 26 10.5 24C11.5 23 13 23.3 13.5 24.5Z" fill="#0ba40b"></path></svg><svg style="left:0px;top:456px" width="36" height="34"><path d="M5 25.5L12 8.5H16L23 25.5H19L17.6 21.8H10.4L9 25.5ZM11.6 18.6H16.4L14 12.2Z" fill="#f0f0f0"></path><rect x="26" y="4.5" width="3" height="23.5" fill="#0ba40b"></rect></svg><div class="a" style="left:0;top:489px;width:34px;height:1px;background:#2e2e2e"></div><div class="a" style="left:5px;top:495px;width:24px;height:24px;border:1.6px solid #d6d6d6;border-radius:2px"></div><div class="a" style="left:8px;top:498px;width:18px;height:18px;background:linear-gradient(135deg,#1098e6 0,#2ea4ea 35%,#8fccf2 70%,#f4f9fd 100%)"></div><div class="a" style="left:5px;top:527px;width:24px;height:24px;border:1.6px solid #d6d6d6;border-radius:1px;background:radial-gradient(circle at 50% 50%,#23a7f2 0,#1a7fc0 30%,#2a3a46 62%,#333 75%)"></div><svg style="left:5px;top:527px" width="24" height="24"><path d="M12 12C9 9 10 4 13.5 1.5M12 12C15 9 20 10 22.5 13.5M12 12C15 15 14 20 10.5 22.5M12 12C9 15 4 14 1.5 10.5" stroke="#f0f0f0" stroke-width="1.5" fill="none"></path></svg><svg style="left:0px;top:555px" width="36" height="32"><path d="M10.2 5.5C12 8.5 14 10.5 14 13A3.8 3.8 0 0 1 6.4 13C6.4 10.5 8.4 8.500 10.2 5.5Z" fill="#129cea"></path><path d="M10 27.500L20.500 17" stroke="#f0f0f0" stroke-width="5" stroke-linecap="round"></path><path d="M10.300 27.200L20 17.500" stroke="#353535" stroke-width="2" stroke-linecap="round"></path><path d="M18 13.500L25 20.500" stroke="#f0f0f0" stroke-width="3.2"></path><path d="M21.500 15.500L26 11" stroke="#f0f0f0" stroke-width="5.200" stroke-linecap="round"></path></svg><svg style="left:0px;top:587px" width="36" height="34"><path d="M11.300 14.600L20 7.500L28.600 14.600L20 22.600Z" fill="none" stroke="#f0f0f0" stroke-width="1.800" stroke-linejoin="round"></path><path d="M11.300 14.800H28.600L20 22.600Z" fill="#f0f0f0"></path><path d="M14.500 11.500L22.500 4.500L23 9.500" stroke="#f0f0f0" stroke-width="1.700" fill="none"></path><path d="M10.200 17.500C12 20.500 14 22.500 14 25A3.800 3.800 0 0 1 6.400 25C6.400 22.500 8.400 20.500 10.200 17.500Z" fill="#129cea"></path></svg><svg style="left:0px;top:622px" width="36" height="32"><path d="M6.500 26V17.500H10.500C12 12 15 7.500 20 7.500C23 7.500 25 9.500 25.500 12C23 11 20.500 12.500 20.500 14.500C20.500 16.500 23 17.800 25 17.500H27.500V26Z" fill="#f0f0f0"></path></svg><svg style="left:0px;top:653.5px" width="36" height="32"><path d="M14.500 27.200V19A2.500 2.500 0 0 1 17 16.500H24.500A2.500 2.500 0 0 1 27 19V28.500Z" fill="#f0f0f0"></path><path d="M17.500 14.500C17.500 12 19 11.200 20.800 11.200S24 12 24 14.500Z" fill="#f0f0f0"></path><rect x="19.300" y="7" width="3.200" height="2.800" rx="1" fill="#f0f0f0"></rect><g fill="#9a9a9a"><circle cx="10.500" cy="6.500" r="1.600"></circle><circle cx="8" cy="10" r="1.700"></circle><circle cx="12.500" cy="9.500" r="1.200"></circle><circle cx="10" cy="14.500" r="2.100"></circle><circle cx="14.500" cy="7" r="1"></circle><circle cx="14" cy="12.500" r="1.200"></circle><circle cx="16" cy="10" r=".8"></circle></g></svg><svg style="left:0px;top:688px" width="36" height="32"><path d="M15.500 11L22 4.500L27.500 10L21 16.500Z" fill="#f0f0f0"></path><path d="M9.500 17L14.500 12L19.500 17L14.500 22Z" fill="#9a9a9a"></path><rect x="6" y="22.500" width="5" height="3" rx="1" fill="#f0f0f0"></rect><rect x="18.500" y="22.500" width="9.500" height="3" rx="1" fill="#f0f0f0"></rect></svg><svg style="left:0px;top:720px" width="36" height="32"><path d="M6 6.500C14 6 12 19 21 19.500" stroke="#f0f0f0" stroke-width="2.800" fill="none"></path><path d="M20 13.500L27.500 19.500L20 25.500Z" fill="#f0f0f0"></path></svg><svg style="left:0px;top:752px" width="36" height="32"><circle cx="17" cy="8.300" r="2.700" fill="none" stroke="#f0f0f0" stroke-width="1.800"></circle><path d="M15.500 10.500L10.500 24.500M18.500 10.500L23.500 24.500" stroke="#f0f0f0" stroke-width="2.400"></path><path d="M17 3.500V5.500" stroke="#f0f0f0" stroke-width="2"></path><path d="M7 17.500H27" stroke="#8e8e8e" stroke-width="1.200"></path><circle cx="17" cy="17.500" r="1.600" fill="#8e8e8e"></circle></svg><div class="a" style="left:0;top:783px;width:34px;height:1px;background:#2e2e2e"></div><svg style="left:0px;top:785px" width="36" height="32"><path d="M9 6.500H19.500C22 6.500 23.500 8 23.500 10.500V25.500H9Z" fill="none" stroke="#f0f0f0" stroke-width="2.200" stroke-linejoin="round"></path><path d="M10 11.500H16M10 14.500H13.500M10 17.500H16M10 20.500H13.500" stroke="#f0f0f0" stroke-width="1.400"></path></svg><svg style="left:0px;top:817px" width="36" height="32"><circle cx="16.500" cy="15" r="8.300" fill="none" stroke="#f0f0f0" stroke-width="2.500"></circle><path d="M22 21L26.500 26" stroke="#f0f0f0" stroke-width="3.200" stroke-linecap="round"></path></svg><svg style="left:0px;top:849px" width="36" height="34"><path d="M13.500 5H25.500L28 7.500V22.500H23.500" fill="none" stroke="#f0f0f0" stroke-width="2.200" stroke-linejoin="round"></path><path d="M6.200 9.700H16L20 13.700V26.700H6.200Z" fill="none" stroke="#f0f0f0" stroke-width="2.400" stroke-linejoin="round"></path><path d="M15.500 9.700V14.200H20" fill="none" stroke="#f0f0f0" stroke-width="1.600"></path></svg><div class="a" style="left:37px;top:98px;width:23px;height:22px;background:#353535"></div><svg style="left:41px;top:100.7px" width="16" height="18"><rect x="1.500" y="7" width="10" height="8.500" fill="#f0f0f0"></rect><path d="M9 7V4.300A2.500 2.500 0 0 1 14 4.300V6" fill="none" stroke="#f0f0f0" stroke-width="1.700"></path></svg><div class="a" style="left:1195px;top:101px;width:1666px;height:0"></div><div class="a" style="left:1195px;top:103px;width:665px;height:860px;background:#2d2d2d;border-left:1px solid #222;border-right:1px solid #222;border-bottom:1px solid #1e1e1e"></div><div class="a" style="left:1195px;top:103px;width:666px;height:37px;background:#282828;border-bottom:1px solid #1b1b1b"></div><div class="a" style="left:1195px;top:103px;width:9px;height:36px;background:#242424"></div><div class="a" style="left:1204px;top:103px;width:166px;height:36px;background:#2e2e2e"></div><div class="a" style="left:1204px;top:136px;width:166px;height:4px;background:#15539e"></div><svg style="left:1216px;top:114.5px" width="17" height="14"><path d="M2.700 0.400H12.100L9.600 3.300H0.200Z" fill="#1da1f2"></path><path d="M4.700 5.700H14.100L11.600 8.300H2.200Z" fill="#8fd0f5"></path><path d="M6.700 10.400H16.100L13.600 13.500H4.200Z" fill="#f4f4f4"></path></svg><div class="t" style="left: 1236px; top: 113px; letter-spacing: -0.059px;">Calques et objets</div><svg style="left:1345px;top:116px" width="10" height="10"><path d="M1.500 1.500L8.500 8.500M8.500 1.500L1.500 8.500" stroke="#b0b0b0" stroke-width="1.800"></path></svg><svg style="left:1390px;top:111px" width="20" height="20"><path d="M2.200 14.200V2H13.800" stroke="#eeeeec" stroke-width="1.300" fill="none"></path><path d="M8 12L16.300 3.600L17.500 4.800L9.800 13.800Z" fill="#eeeeec"></path><path d="M7.200 12.800L9 14.600" stroke="#282828" stroke-width=".900"></path><path d="M7 13.200C6.500 15.500 5 16.600 2.800 16.400C4 15.500 4.300 14.200 5 13C5.800 12.200 6.800 12.500 7 13.200Z" fill="#1e9bea"></path></svg><svg style="left:1455px;top:111px" width="18" height="20"><path d="M3.600 15.500C4.500 11 8 7.500 13.500 5" stroke="#eeeeec" stroke-width="1.500" fill="none"></path><path d="M6 10.500L5.500 7M8.500 8L12 9.500M4.800 12.500L9 13.500M9.500 7L9.500 4" stroke="#eeeeec" stroke-width="1.200"></path><circle cx="3.500" cy="15.800" r="1.700" fill="#eeeeec"></circle><circle cx="14.300" cy="4.500" r="1.500" fill="#eeeeec"></circle></svg><svg style="left:1520px;top:113px" width="18" height="16"><path d="M1.300 0.700V14" stroke="#0ba40b" stroke-width="1.300"></path><rect x="4" y="1.200" width="7" height="2.600" fill="#eeeeec"></rect><rect x="4" y="5.800" width="10" height="3.200" fill="#eeeeec"></rect><rect x="4" y="11" width="6" height="2.700" fill="#eeeeec"></rect></svg><svg style="left:1582px;top:111px" width="20" height="20"><rect x="2" y="11.300" width="7.300" height="6.800" fill="#eeeeec"></rect><path d="M7 5L15 11" stroke="#0ba40b" stroke-width="3.400"></path><circle cx="6.500" cy="4.600" r="3.300" fill="#0ba40b"></circle><circle cx="15.800" cy="11.500" r="3.300" fill="#0ba40b"></circle><path d="M6.500 4.600L2 1.500L5.500 -1Z" fill="#282828"></path><path d="M5.200 3.600L1.500 1.200L5 -1.300Z" fill="#282828" transform="translate(.6 .3)"></path><path d="M15.800 11.500L20.500 14.600L17 17.200Z" fill="#282828" transform="translate(.4 .3)"></path></svg><svg style="left:1646px;top:111px" width="20" height="20"><path d="M3 2.800H9L13 6.800V9M13 14.500V16.200H3V2.800" fill="none" stroke="#eeeeec" stroke-width="2" stroke-linejoin="round"></path><path d="M8.500 2.800V7.300H13" fill="none" stroke="#eeeeec" stroke-width="1.300"></path><rect x="9" y="10.300" width="6" height="2" fill="#0ba40b"></rect><path d="M13.800 7.800L17.800 11.300L13.800 14.800Z" fill="#0ba40b"></path></svg><svg style="left:1713px;top:115px" width="16" height="14"><rect x=".600" y=".600" width="13" height="10.800" fill="none" stroke="#0ba40b" stroke-width="1.200"></rect><path d="M2.500 9.800L6 4.800L9.500 9.800Z" fill="#0ba40b"></path><circle cx="9.800" cy="4" r="1.700" fill="#0ba40b"></circle></svg><svg style="left:1774px;top:111px" width="20" height="20"><path d="M5.200 9.500A6.400 6.400 0 1 1 13.500 15.600" fill="none" stroke="#eeeeec" stroke-width="2.100"></path><path d="M1.800 8.300H8.600L5.200 12.300Z" fill="#eeeeec"></path><circle cx="11" cy="9.200" r="2" fill="#0ba40b"></circle><rect x="2" y="12.800" width="6" height="5.300" fill="#eeeeec"></rect></svg><div class="a" style="left:1830px;top:106px;width:30px;height:30px;border-radius:5px;background:#2e2e2e"></div><svg style="left:1838px;top:116px" width="14" height="9"><path d="M1.500 1.500L7 7L12.500 1.500" stroke="#8b8b8b" stroke-width="1.800" fill="none"></path></svg><div class="a" style="left:1859px;top:140px;width:2px;height:38px;background:#2d2d2d"></div><svg style="left:1206px;top:149px" width="18" height="18"><path d="M10 2V10M6 6H14" stroke="#0ba40b" stroke-width="1.900"></path><path d="M3.800 12.200H15.500L13 15.300H1.200Z" fill="#f4f4f4"></path></svg><svg style="left:1454px;top:153px" width="16" height="10"><path d="M2 8L8 2.500L14 8" stroke="#eeeeec" stroke-width="2" fill="none"></path></svg><svg style="left:1490px;top:152px" width="16" height="10"><path d="M2 2L8 7.500L14 2" stroke="#eeeeec" stroke-width="2" fill="none"></path></svg><svg style="left:1526px;top:150px" width="16" height="18"><path d="M2 3.500H14" stroke="#eeeeec" stroke-width="1.600"></path><rect x="5.500" y="1" width="5" height="2" fill="#eeeeec"></rect><path d="M3 5H13L12.300 15.500A1.200 1.200 0 0 1 11.100 16.500H4.900A1.200 1.200 0 0 1 3.700 15.500Z" fill="#eeeeec"></path><path d="M6 7V14.500M8 7V14.500M10 7V14.500" stroke="#2d2d2d" stroke-width=".900"></path></svg><div class="a" style="left:1556px;top:142px;width:1px;height:33px;background:#262626"></div><svg style="left:1571px;top:150px" width="16" height="16"><circle cx="8" cy="8" r="3.500" fill="none" stroke="#eeeeec" stroke-width="3.600"></circle><rect x="6.700" y="0.600" width="2.600" height="3" fill="#eeeeec" transform="rotate(0 8 8)"></rect><rect x="6.700" y="0.600" width="2.600" height="3" fill="#eeeeec" transform="rotate(45 8 8)"></rect><rect x="6.700" y="0.600" width="2.600" height="3" fill="#eeeeec" transform="rotate(90 8 8)"></rect><rect x="6.700" y="0.600" width="2.600" height="3" fill="#eeeeec" transform="rotate(135 8 8)"></rect><rect x="6.700" y="0.600" width="2.600" height="3" fill="#eeeeec" transform="rotate(180 8 8)"></rect><rect x="6.700" y="0.600" width="2.600" height="3" fill="#eeeeec" transform="rotate(225 8 8)"></rect><rect x="6.700" y="0.600" width="2.600" height="3" fill="#eeeeec" transform="rotate(270 8 8)"></rect><rect x="6.700" y="0.600" width="2.600" height="3" fill="#eeeeec" transform="rotate(315 8 8)"></rect></svg><div class="entry" style="left:1602px;top:142px;width:257px;height:33px;background:#2d2d2d"></div><svg style="left:1606px;top:150px" width="18" height="18"><circle cx="7.500" cy="7" r="5.300" fill="none" stroke="#eeeeec" stroke-width="1.900"></circle><path d="M11.500 11L15.500 15.500" stroke="#eeeeec" stroke-width="2.200" stroke-linecap="round"></path></svg><div class="a" style="left:1196px;top:178px;width:663px;height:1px;background:#1b1b1b"></div><div class="a" style="left:1197px;top:179px;width:654px;height:24px;background:#213e66"></div><div class="a" style="left:1197px;top:203px;width:654px;height:24px;background:#2d2d2d"></div><div class="a" style="left:1197px;top:227px;width:654px;height:24px;background:#185193"></div><div class="a" style="left:1852px;top:180px;width:6px;height:22px;background:#3e82f0"></div><div class="a" style="left:1852px;top:204px;width:6px;height:22px;background:#3e82f0"></div><div class="a" style="left:1852px;top:228px;width:6px;height:22px;background:#3e82f0"></div><svg style="left:1200px;top:188px" width="9" height="6"><path d="M0 0.500H8.500L4.200 5.500Z" fill="#c8c8c8"></path></svg><svg style="left:1216px;top:184px" width="14" height="16"><path d="M1.500 1H8.500L12.500 5V14.500H1.500Z" fill="none" stroke="#3a84f0" stroke-width="1.600" stroke-linejoin="round"></path><path d="M8 1V5.500H12.500" fill="none" stroke="#3a84f0" stroke-width="1.200"></path></svg><div class="t" style="left: 1237px; top: 183px; letter-spacing: -0.496px;">Layer 1</div><svg style="left:1227px;top:207px" width="16" height="16"><path d="M3.500 13C3.500 7 6 3.500 11 3.300" fill="none" stroke="#3a84f0" stroke-width="1.300"></path><rect x="1.500" y="1" width="3.400" height="3.400" fill="none" stroke="#3a84f0" stroke-width="1.100"></rect><rect x="11" y="1.500" width="3.400" height="3.400" fill="none" stroke="#3a84f0" stroke-width="1.100"></rect><rect x="1.500" y="11.500" width="3.400" height="3.400" fill="none" stroke="#3a84f0" stroke-width="1.100"></rect><path d="M3.200 4.500V11.500" stroke="#3a84f0" stroke-width="1.100"></path></svg><div class="t" style="left: 1250px; top: 207px; letter-spacing: 0.228px;">path3</div><svg style="left:1227px;top:231px" width="16" height="16"><path d="M3.500 13C3.500 7 6 3.500 11 3.300" fill="none" stroke="#5a9af5" stroke-width="1.300"></path><rect x="1.500" y="1" width="3.400" height="3.400" fill="none" stroke="#5a9af5" stroke-width="1.100"></rect><rect x="11" y="1.500" width="3.400" height="3.400" fill="none" stroke="#5a9af5" stroke-width="1.100"></rect><rect x="1.500" y="11.500" width="3.400" height="3.400" fill="none" stroke="#5a9af5" stroke-width="1.100"></rect><path d="M3.200 4.500V11.500" stroke="#5a9af5" stroke-width="1.100"></path></svg><div class="t" style="left: 1250px; top: 231px; letter-spacing: 0.128px;">path1</div><svg style="left:1878px;top:108px" width="26" height="26"><path d="M3.500 3.500H12L18.500 10V22.500H3.500Z" fill="none" stroke="#eeeeec" stroke-width="2.400" stroke-linejoin="round"></path><path d="M11.500 3.500V10.500H18.500" fill="none" stroke="#eeeeec" stroke-width="1.800"></path><path d="M21.500 0L22.800 3.200L26 3.400L23.500 5.500L24.400 8.800L21.500 7L18.600 8.800L19.500 5.500L17 3.400L20.200 3.200Z" fill="#0ba40b"></path></svg><svg style="left:1878px;top:144px" width="26" height="26"><path d="M2 22.500V2.500H10L11.500 6H21.500V10" fill="#eeeeec"></path><path d="M2 22.500L6 11.500H26L22.500 22.500Z" fill="#eeeeec" stroke="#353535" stroke-width="1"></path><path d="M2 2.500H10L11.500 6H21.500V11H6L2 22.500Z" fill="#eeeeec"></path></svg><svg style="left:1879px;top:181px" width="26" height="26"><rect x="10.500" y="0" width="2.800" height="9" fill="#0ba40b"></rect><path d="M6.500 7.500H17.500L12 13.500Z" fill="#0ba40b"></path><path d="M1.500 16L5.500 9.500H7.500L4.500 15.500H19.500L16.500 9.500H18.500L22.500 16V23.500H1.500Z" fill="#eeeeec"></path><rect x="8" y="17.500" width="8" height="2" fill="#353535"></rect></svg><svg style="left:1879px;top:218px" width="26" height="24"><rect x="6" y="1" width="12" height="3" fill="#eeeeec"></rect><path d="M1.500 8A2.500 2.500 0 0 1 4 5.500H20A2.500 2.500 0 0 1 22.500 8V14.500H1.500Z" fill="#b5b5b5"></path><rect x="6.500" y="12" width="11" height="9.500" fill="#eeeeec" stroke="#353535" stroke-width="1.400"></rect></svg><div class="a" style="left:1870px;top:250px;width:44px;height:1px;background:#2e2e2e"></div><svg style="left:1879px;top:258px" width="26" height="26"><path d="M5.500 7V2.500H15L20.500 8V22.500H5.500V18" fill="none" stroke="#eeeeec" stroke-width="2.300" stroke-linejoin="round"></path><path d="M14.500 2.500V8.500H20.500" fill="none" stroke="#eeeeec" stroke-width="1.600"></path><rect x="0" y="11.300" width="8" height="2.600" fill="#0ba40b"></rect><path d="M7 7.500L13 12.600L7 17.700Z" fill="#0ba40b"></path></svg><svg style="left:1878px;top:295px" width="28" height="26"><path d="M3.500 2.500H12L18 8.500V10M18 17V22.500H3.500V2.500" fill="none" stroke="#eeeeec" stroke-width="2.300" stroke-linejoin="round"></path><path d="M11.500 2.500V9H18" fill="none" stroke="#eeeeec" stroke-width="1.600"></path><rect x="12" y="12.300" width="8" height="2.600" fill="#0ba40b"></rect><path d="M19 8.500L25.500 13.600L19 18.700Z" fill="#0ba40b"></path></svg><div class="a" style="left:1870px;top:329px;width:44px;height:1px;background:#2e2e2e"></div><svg style="left:1880px;top:339px" width="24" height="20"><path d="M7 7H15.500A4.700 4.700 0 0 1 15.500 16.400H13" fill="none" stroke="#8b8b8b" stroke-width="2.700"></path><path d="M8 2L2 7L8 12Z" fill="#8b8b8b"></path></svg><svg style="left:1880px;top:375px" width="24" height="20"><path d="M17 7H8.500A4.700 4.700 0 0 0 8.500 16.400H11" fill="none" stroke="#eeeeec" stroke-width="2.700"></path><path d="M16 2L22 7L16 12Z" fill="#eeeeec"></path></svg><div class="a" style="left:1870px;top:406px;width:44px;height:1px;background:#2e2e2e"></div><svg style="left:1879px;top:414px" width="26" height="26"><rect x="1" y="1" width="14.500" height="14.500" fill="#eeeeec"></rect><rect x="8.300" y="8.500" width="17.200" height="17" fill="#eeeeec" stroke="#353535" stroke-width="1.500"></rect></svg><svg style="left:1879px;top:451px" width="26" height="26"><path d="M4 1.500L17.500 18M20 1.500L6.500 18" stroke="#eeeeec" stroke-width="3"></path><circle cx="5" cy="20" r="3.600" fill="none" stroke="#eeeeec" stroke-width="2.600"></circle><circle cx="19" cy="20" r="3.600" fill="none" stroke="#eeeeec" stroke-width="2.600"></circle></svg><svg style="left:1879px;top:489px" width="24" height="26"><path d="M2 3.500H19.500V23H2Z" fill="none" stroke="#eeeeec" stroke-width="1.600"></path><rect x="6.500" y="1" width="8.500" height="5" fill="#eeeeec"></rect><path d="M5 7.500H16.500V17L13.500 20.500H5Z" fill="#eeeeec"></path></svg><div class="a" style="left:1870px;top:521px;width:44px;height:1px;background:#2e2e2e"></div><div class="entry" style="left:1871px;top:525px;width:43px;height:34px;background:#323232"></div><svg style="left:1883px;top:537px" width="18" height="10"><path d="M0 0H18L9 9Z" fill="#eeeeec"></path></svg><div class="a" style="left:1870px;top:562px;width:44px;height:1px;background:#2e2e2e"></div><div class="a" style="left:0;top:969px;width:1920px;height:37px;background:#353535"></div><div class="a" style="left:35px;top:970px;width:1820px;height:35px;background:#303030"></div><div class="a" style="left:1px;top:971px;width:33px;height:33px;background:#fff"></div><svg style="left:1px;top:971px" width="33" height="33"><path d="M2.500 3L30.500 30.500M30.500 3L2.500 30.500" stroke="#c8283c" stroke-width="2.200" stroke-linecap="round"></path></svg><div class="a" style="left:35px;top:971px;width:22px;height:16px;background:#000000;box-shadow:inset 0 0 0 1px rgba(0,0,0,.13)"></div><div class="a" style="left:58px;top:971px;width:22px;height:16px;background:#1a1a1a;box-shadow:inset 0 0 0 1px rgba(0,0,0,.13)"></div><div class="a" style="left:81px;top:971px;width:22px;height:16px;background:#333333;box-shadow:inset 0 0 0 1px rgba(0,0,0,.13)"></div><div class="a" style="left:104px;top:971px;width:22px;height:16px;background:#4d4d4d;box-shadow:inset 0 0 0 1px rgba(0,0,0,.13)"></div><div class="a" style="left:127px;top:971px;width:22px;height:16px;background:#666666;box-shadow:inset 0 0 0 1px rgba(0,0,0,.13)"></div><div class="a" style="left:150px;top:971px;width:22px;height:16px;background:#808080;box-shadow:inset 0 0 0 1px rgba(0,0,0,.13)"></div><div class="a" style="left:173px;top:971px;width:22px;height:16px;background:#999999;box-shadow:inset 0 0 0 1px rgba(0,0,0,.13)"></div><div class="a" style="left:196px;top:971px;width:22px;height:16px;background:#b3b3b3;box-shadow:inset 0 0 0 1px rgba(0,0,0,.13)"></div><div class="a" style="left:219px;top:971px;width:22px;height:16px;background:#cccccc;box-shadow:inset 0 0 0 1px rgba(0,0,0,.13)"></div><div class="a" style="left:242px;top:971px;width:22px;height:16px;background:#e6e6e6;box-shadow:inset 0 0 0 1px rgba(0,0,0,.13)"></div><div class="a" style="left:265px;top:971px;width:22px;height:16px;background:#ececec;box-shadow:inset 0 0 0 1px rgba(0,0,0,.13)"></div><div class="a" style="left:288px;top:971px;width:22px;height:16px;background:#f2f2f2;box-shadow:inset 0 0 0 1px rgba(0,0,0,.13)"></div><div class="a" style="left:311px;top:971px;width:22px;height:16px;background:#f9f9f9;box-shadow:inset 0 0 0 1px rgba(0,0,0,.13)"></div><div class="a" style="left:334px;top:971px;width:22px;height:16px;background:#ffffff;box-shadow:inset 0 0 0 1px rgba(0,0,0,.13)"></div><div class="a" style="left:357px;top:971px;width:22px;height:16px;background:#800000;box-shadow:inset 0 0 0 1px rgba(0,0,0,.13)"></div><div class="a" style="left:380px;top:971px;width:22px;height:16px;background:#ff0000;box-shadow:inset 0 0 0 1px rgba(0,0,0,.13)"></div><div class="a" style="left:403px;top:971px;width:22px;height:16px;background:#808000;box-shadow:inset 0 0 0 1px rgba(0,0,0,.13)"></div><div class="a" style="left:426px;top:971px;width:22px;height:16px;background:#ffff00;box-shadow:inset 0 0 0 1px rgba(0,0,0,.13)"></div><div class="a" style="left:449px;top:971px;width:22px;height:16px;background:#008000;box-shadow:inset 0 0 0 1px rgba(0,0,0,.13)"></div><div class="a" style="left:472px;top:971px;width:22px;height:16px;background:#00ff00;box-shadow:inset 0 0 0 1px rgba(0,0,0,.13)"></div><div class="a" style="left:495px;top:971px;width:22px;height:16px;background:#008080;box-shadow:inset 0 0 0 1px rgba(0,0,0,.13)"></div><div class="a" style="left:518px;top:971px;width:22px;height:16px;background:#00ffff;box-shadow:inset 0 0 0 1px rgba(0,0,0,.13)"></div><div class="a" style="left:541px;top:971px;width:22px;height:16px;background:#000080;box-shadow:inset 0 0 0 1px rgba(0,0,0,.13)"></div><div class="a" style="left:564px;top:971px;width:22px;height:16px;background:#0000ff;box-shadow:inset 0 0 0 1px rgba(0,0,0,.13)"></div><div class="a" style="left:587px;top:971px;width:22px;height:16px;background:#800080;box-shadow:inset 0 0 0 1px rgba(0,0,0,.13)"></div><div class="a" style="left:610px;top:971px;width:22px;height:16px;background:#ff00ff;box-shadow:inset 0 0 0 1px rgba(0,0,0,.13)"></div><div class="a" style="left:633px;top:971px;width:22px;height:16px;background:#2b0000;box-shadow:inset 0 0 0 1px rgba(0,0,0,.13)"></div><div class="a" style="left:656px;top:971px;width:22px;height:16px;background:#550000;box-shadow:inset 0 0 0 1px rgba(0,0,0,.13)"></div><div class="a" style="left:679px;top:971px;width:22px;height:16px;background:#800000;box-shadow:inset 0 0 0 1px rgba(0,0,0,.13)"></div><div class="a" style="left:702px;top:971px;width:22px;height:16px;background:#aa0000;box-shadow:inset 0 0 0 1px rgba(0,0,0,.13)"></div><div class="a" style="left:725px;top:971px;width:22px;height:16px;background:#d40000;box-shadow:inset 0 0 0 1px rgba(0,0,0,.13)"></div><div class="a" style="left:748px;top:971px;width:22px;height:16px;background:#ff0000;box-shadow:inset 0 0 0 1px rgba(0,0,0,.13)"></div><div class="a" style="left:771px;top:971px;width:22px;height:16px;background:#ff2a2a;box-shadow:inset 0 0 0 1px rgba(0,0,0,.13)"></div><div class="a" style="left:794px;top:971px;width:22px;height:16px;background:#ff5555;box-shadow:inset 0 0 0 1px rgba(0,0,0,.13)"></div><div class="a" style="left:817px;top:971px;width:22px;height:16px;background:#ff8080;box-shadow:inset 0 0 0 1px rgba(0,0,0,.13)"></div><div class="a" style="left:840px;top:971px;width:22px;height:16px;background:#ffaaaa;box-shadow:inset 0 0 0 1px rgba(0,0,0,.13)"></div><div class="a" style="left:863px;top:971px;width:22px;height:16px;background:#ffd5d5;box-shadow:inset 0 0 0 1px rgba(0,0,0,.13)"></div><div class="a" style="left:886px;top:971px;width:21px;height:16px;background:#280b0b;box-shadow:inset 0 0 0 1px rgba(0,0,0,.13)"></div><div class="a" style="left:908px;top:971px;width:21px;height:16px;background:#501616;box-shadow:inset 0 0 0 1px rgba(0,0,0,.13)"></div><div class="a" style="left:930px;top:971px;width:21px;height:16px;background:#782121;box-shadow:inset 0 0 0 1px rgba(0,0,0,.13)"></div><div class="a" style="left:952px;top:971px;width:21px;height:16px;background:#a02c2c;box-shadow:inset 0 0 0 1px rgba(0,0,0,.13)"></div><div class="a" style="left:974px;top:971px;width:21px;height:16px;background:#c83737;box-shadow:inset 0 0 0 1px rgba(0,0,0,.13)"></div><div class="a" style="left:996px;top:971px;width:21px;height:16px;background:#d35f5f;box-shadow:inset 0 0 0 1px rgba(0,0,0,.13)"></div><div class="a" style="left:1018px;top:971px;width:21px;height:16px;background:#de8787;box-shadow:inset 0 0 0 1px rgba(0,0,0,.13)"></div><div class="a" style="left:1040px;top:971px;width:21px;height:16px;background:#e9afaf;box-shadow:inset 0 0 0 1px rgba(0,0,0,.13)"></div><div class="a" style="left:1062px;top:971px;width:21px;height:16px;background:#f4d7d7;box-shadow:inset 0 0 0 1px rgba(0,0,0,.13)"></div><div class="a" style="left:1084px;top:971px;width:21px;height:16px;background:#241c1c;box-shadow:inset 0 0 0 1px rgba(0,0,0,.13)"></div><div class="a" style="left:1106px;top:971px;width:21px;height:16px;background:#483737;box-shadow:inset 0 0 0 1px rgba(0,0,0,.13)"></div><div class="a" style="left:1128px;top:971px;width:21px;height:16px;background:#6c5353;box-shadow:inset 0 0 0 1px rgba(0,0,0,.13)"></div><div class="a" style="left:1150px;top:971px;width:21px;height:16px;background:#916f6f;box-shadow:inset 0 0 0 1px rgba(0,0,0,.13)"></div><div class="a" style="left:1172px;top:971px;width:21px;height:16px;background:#ac9393;box-shadow:inset 0 0 0 1px rgba(0,0,0,.13)"></div><div class="a" style="left:1194px;top:971px;width:21px;height:16px;background:#c8b7b7;box-shadow:inset 0 0 0 1px rgba(0,0,0,.13)"></div><div class="a" style="left:1216px;top:971px;width:21px;height:16px;background:#e3dbdb;box-shadow:inset 0 0 0 1px rgba(0,0,0,.13)"></div><div class="a" style="left:1238px;top:971px;width:21px;height:16px;background:#2b1100;box-shadow:inset 0 0 0 1px rgba(0,0,0,.13)"></div><div class="a" style="left:1260px;top:971px;width:21px;height:16px;background:#552200;box-shadow:inset 0 0 0 1px rgba(0,0,0,.13)"></div><div class="a" style="left:1282px;top:971px;width:21px;height:16px;background:#803300;box-shadow:inset 0 0 0 1px rgba(0,0,0,.13)"></div><div class="a" style="left:1304px;top:971px;width:21px;height:16px;background:#aa4400;box-shadow:inset 0 0 0 1px rgba(0,0,0,.13)"></div><div class="a" style="left:1326px;top:971px;width:21px;height:16px;background:#d45500;box-shadow:inset 0 0 0 1px rgba(0,0,0,.13)"></div><div class="a" style="left:1348px;top:971px;width:21px;height:16px;background:#ff6600;box-shadow:inset 0 0 0 1px rgba(0,0,0,.13)"></div><div class="a" style="left:1370px;top:971px;width:21px;height:16px;background:#ff7f2a;box-shadow:inset 0 0 0 1px rgba(0,0,0,.13)"></div><div class="a" style="left:1392px;top:971px;width:21px;height:16px;background:#ff9955;box-shadow:inset 0 0 0 1px rgba(0,0,0,.13)"></div><div class="a" style="left:1414px;top:971px;width:21px;height:16px;background:#ffb380;box-shadow:inset 0 0 0 1px rgba(0,0,0,.13)"></div><div class="a" style="left:1436px;top:971px;width:21px;height:16px;background:#ffccaa;box-shadow:inset 0 0 0 1px rgba(0,0,0,.13)"></div><div class="a" style="left:1458px;top:971px;width:21px;height:16px;background:#ffe6d5;box-shadow:inset 0 0 0 1px rgba(0,0,0,.13)"></div><div class="a" style="left:1480px;top:971px;width:21px;height:16px;background:#28170b;box-shadow:inset 0 0 0 1px rgba(0,0,0,.13)"></div><div class="a" style="left:1502px;top:971px;width:21px;height:16px;background:#502d16;box-shadow:inset 0 0 0 1px rgba(0,0,0,.13)"></div><div class="a" style="left:1524px;top:971px;width:21px;height:16px;background:#784421;box-shadow:inset 0 0 0 1px rgba(0,0,0,.13)"></div><div class="a" style="left:1546px;top:971px;width:21px;height:16px;background:#a05a2c;box-shadow:inset 0 0 0 1px rgba(0,0,0,.13)"></div><div class="a" style="left:1568px;top:971px;width:21px;height:16px;background:#c87137;box-shadow:inset 0 0 0 1px rgba(0,0,0,.13)"></div><div class="a" style="left:1590px;top:971px;width:21px;height:16px;background:#d38d5f;box-shadow:inset 0 0 0 1px rgba(0,0,0,.13)"></div><div class="a" style="left:1612px;top:971px;width:21px;height:16px;background:#deaa87;box-shadow:inset 0 0 0 1px rgba(0,0,0,.13)"></div><div class="a" style="left:1634px;top:971px;width:21px;height:16px;background:#e9c6af;box-shadow:inset 0 0 0 1px rgba(0,0,0,.13)"></div><div class="a" style="left:1656px;top:971px;width:21px;height:16px;background:#f4e3d7;box-shadow:inset 0 0 0 1px rgba(0,0,0,.13)"></div><div class="a" style="left:1678px;top:971px;width:21px;height:16px;background:#241f1c;box-shadow:inset 0 0 0 1px rgba(0,0,0,.13)"></div><div class="a" style="left:1700px;top:971px;width:21px;height:16px;background:#483e37;box-shadow:inset 0 0 0 1px rgba(0,0,0,.13)"></div><div class="a" style="left:1722px;top:971px;width:21px;height:16px;background:#6c5d53;box-shadow:inset 0 0 0 1px rgba(0,0,0,.13)"></div><div class="a" style="left:1744px;top:971px;width:21px;height:16px;background:#917c6f;box-shadow:inset 0 0 0 1px rgba(0,0,0,.13)"></div><div class="a" style="left:1766px;top:971px;width:21px;height:16px;background:#ac9d93;box-shadow:inset 0 0 0 1px rgba(0,0,0,.13)"></div><div class="a" style="left:1788px;top:971px;width:21px;height:16px;background:#c8beb7;box-shadow:inset 0 0 0 1px rgba(0,0,0,.13)"></div><div class="a" style="left:1810px;top:971px;width:21px;height:16px;background:#e3dedb;box-shadow:inset 0 0 0 1px rgba(0,0,0,.13)"></div><div class="a" style="left:1832px;top:971px;width:21px;height:16px;background:#2b2200;box-shadow:inset 0 0 0 1px rgba(0,0,0,.13)"></div><div class="a" style="left:35px;top:988px;width:22px;height:16px;background:#554400;box-shadow:inset 0 0 0 1px rgba(0,0,0,.13)"></div><div class="a" style="left:58px;top:988px;width:22px;height:16px;background:#806600;box-shadow:inset 0 0 0 1px rgba(0,0,0,.13)"></div><div class="a" style="left:81px;top:988px;width:22px;height:16px;background:#aa8800;box-shadow:inset 0 0 0 1px rgba(0,0,0,.13)"></div><div class="a" style="left:104px;top:988px;width:22px;height:16px;background:#d4aa00;box-shadow:inset 0 0 0 1px rgba(0,0,0,.13)"></div><div class="a" style="left:127px;top:988px;width:22px;height:16px;background:#ffcc00;box-shadow:inset 0 0 0 1px rgba(0,0,0,.13)"></div><div class="a" style="left:150px;top:988px;width:22px;height:16px;background:#ffd42a;box-shadow:inset 0 0 0 1px rgba(0,0,0,.13)"></div><div class="a" style="left:173px;top:988px;width:22px;height:16px;background:#ffdd55;box-shadow:inset 0 0 0 1px rgba(0,0,0,.13)"></div><div class="a" style="left:196px;top:988px;width:22px;height:16px;background:#ffe680;box-shadow:inset 0 0 0 1px rgba(0,0,0,.13)"></div><div class="a" style="left:219px;top:988px;width:22px;height:16px;background:#ffeeaa;box-shadow:inset 0 0 0 1px rgba(0,0,0,.13)"></div><div class="a" style="left:242px;top:988px;width:22px;height:16px;background:#fff6d5;box-shadow:inset 0 0 0 1px rgba(0,0,0,.13)"></div><div class="a" style="left:265px;top:988px;width:22px;height:16px;background:#28220b;box-shadow:inset 0 0 0 1px rgba(0,0,0,.13)"></div><div class="a" style="left:288px;top:988px;width:22px;height:16px;background:#504416;box-shadow:inset 0 0 0 1px rgba(0,0,0,.13)"></div><div class="a" style="left:311px;top:988px;width:22px;height:16px;background:#786721;box-shadow:inset 0 0 0 1px rgba(0,0,0,.13)"></div><div class="a" style="left:334px;top:988px;width:22px;height:16px;background:#a0892c;box-shadow:inset 0 0 0 1px rgba(0,0,0,.13)"></div><div class="a" style="left:357px;top:988px;width:22px;height:16px;background:#c8ab37;box-shadow:inset 0 0 0 1px rgba(0,0,0,.13)"></div><div class="a" style="left:380px;top:988px;width:22px;height:16px;background:#d3bc5f;box-shadow:inset 0 0 0 1px rgba(0,0,0,.13)"></div><div class="a" style="left:403px;top:988px;width:22px;height:16px;background:#decd87;box-shadow:inset 0 0 0 1px rgba(0,0,0,.13)"></div><div class="a" style="left:426px;top:988px;width:22px;height:16px;background:#e9ddaf;box-shadow:inset 0 0 0 1px rgba(0,0,0,.13)"></div><div class="a" style="left:449px;top:988px;width:22px;height:16px;background:#f4eed7;box-shadow:inset 0 0 0 1px rgba(0,0,0,.13)"></div><div class="a" style="left:472px;top:988px;width:22px;height:16px;background:#24221c;box-shadow:inset 0 0 0 1px rgba(0,0,0,.13)"></div><div class="a" style="left:495px;top:988px;width:22px;height:16px;background:#484537;box-shadow:inset 0 0 0 1px rgba(0,0,0,.13)"></div><div class="a" style="left:518px;top:988px;width:22px;height:16px;background:#6c6753;box-shadow:inset 0 0 0 1px rgba(0,0,0,.13)"></div><div class="a" style="left:541px;top:988px;width:22px;height:16px;background:#918a6f;box-shadow:inset 0 0 0 1px rgba(0,0,0,.13)"></div><div class="a" style="left:564px;top:988px;width:22px;height:16px;background:#aca793;box-shadow:inset 0 0 0 1px rgba(0,0,0,.13)"></div><div class="a" style="left:587px;top:988px;width:22px;height:16px;background:#c8c4b7;box-shadow:inset 0 0 0 1px rgba(0,0,0,.13)"></div><div class="a" style="left:610px;top:988px;width:22px;height:16px;background:#e3e2db;box-shadow:inset 0 0 0 1px rgba(0,0,0,.13)"></div><div class="a" style="left:633px;top:988px;width:22px;height:16px;background:#222b00;box-shadow:inset 0 0 0 1px rgba(0,0,0,.13)"></div><div class="a" style="left:656px;top:988px;width:22px;height:16px;background:#445500;box-shadow:inset 0 0 0 1px rgba(0,0,0,.13)"></div><div class="a" style="left:679px;top:988px;width:22px;height:16px;background:#668000;box-shadow:inset 0 0 0 1px rgba(0,0,0,.13)"></div><div class="a" style="left:702px;top:988px;width:22px;height:16px;background:#88aa00;box-shadow:inset 0 0 0 1px rgba(0,0,0,.13)"></div><div class="a" style="left:725px;top:988px;width:22px;height:16px;background:#aad400;box-shadow:inset 0 0 0 1px rgba(0,0,0,.13)"></div><div class="a" style="left:748px;top:988px;width:22px;height:16px;background:#ccff00;box-shadow:inset 0 0 0 1px rgba(0,0,0,.13)"></div><div class="a" style="left:771px;top:988px;width:22px;height:16px;background:#d4ff2a;box-shadow:inset 0 0 0 1px rgba(0,0,0,.13)"></div><div class="a" style="left:794px;top:988px;width:22px;height:16px;background:#ddff55;box-shadow:inset 0 0 0 1px rgba(0,0,0,.13)"></div><div class="a" style="left:817px;top:988px;width:22px;height:16px;background:#e5ff80;box-shadow:inset 0 0 0 1px rgba(0,0,0,.13)"></div><div class="a" style="left:840px;top:988px;width:22px;height:16px;background:#eeffaa;box-shadow:inset 0 0 0 1px rgba(0,0,0,.13)"></div><div class="a" style="left:863px;top:988px;width:22px;height:16px;background:#f6ffd5;box-shadow:inset 0 0 0 1px rgba(0,0,0,.13)"></div><div class="a" style="left:886px;top:988px;width:21px;height:16px;background:#22280b;box-shadow:inset 0 0 0 1px rgba(0,0,0,.13)"></div><div class="a" style="left:908px;top:988px;width:21px;height:16px;background:#445016;box-shadow:inset 0 0 0 1px rgba(0,0,0,.13)"></div><div class="a" style="left:930px;top:988px;width:21px;height:16px;background:#677821;box-shadow:inset 0 0 0 1px rgba(0,0,0,.13)"></div><div class="a" style="left:952px;top:988px;width:21px;height:16px;background:#89a02c;box-shadow:inset 0 0 0 1px rgba(0,0,0,.13)"></div><div class="a" style="left:974px;top:988px;width:21px;height:16px;background:#abc837;box-shadow:inset 0 0 0 1px rgba(0,0,0,.13)"></div><div class="a" style="left:996px;top:988px;width:21px;height:16px;background:#bcd35f;box-shadow:inset 0 0 0 1px rgba(0,0,0,.13)"></div><div class="a" style="left:1018px;top:988px;width:21px;height:16px;background:#cdde87;box-shadow:inset 0 0 0 1px rgba(0,0,0,.13)"></div><div class="a" style="left:1040px;top:988px;width:21px;height:16px;background:#dde9af;box-shadow:inset 0 0 0 1px rgba(0,0,0,.13)"></div><div class="a" style="left:1062px;top:988px;width:21px;height:16px;background:#eef4d7;box-shadow:inset 0 0 0 1px rgba(0,0,0,.13)"></div><div class="a" style="left:1084px;top:988px;width:21px;height:16px;background:#22241c;box-shadow:inset 0 0 0 1px rgba(0,0,0,.13)"></div><div class="a" style="left:1106px;top:988px;width:21px;height:16px;background:#454837;box-shadow:inset 0 0 0 1px rgba(0,0,0,.13)"></div><div class="a" style="left:1128px;top:988px;width:21px;height:16px;background:#676c53;box-shadow:inset 0 0 0 1px rgba(0,0,0,.13)"></div><div class="a" style="left:1150px;top:988px;width:21px;height:16px;background:#8a916f;box-shadow:inset 0 0 0 1px rgba(0,0,0,.13)"></div><div class="a" style="left:1172px;top:988px;width:21px;height:16px;background:#a7ac93;box-shadow:inset 0 0 0 1px rgba(0,0,0,.13)"></div><div class="a" style="left:1194px;top:988px;width:21px;height:16px;background:#c4c8b7;box-shadow:inset 0 0 0 1px rgba(0,0,0,.13)"></div><div class="a" style="left:1216px;top:988px;width:21px;height:16px;background:#e2e3db;box-shadow:inset 0 0 0 1px rgba(0,0,0,.13)"></div><div class="a" style="left:1238px;top:988px;width:21px;height:16px;background:#112b00;box-shadow:inset 0 0 0 1px rgba(0,0,0,.13)"></div><div class="a" style="left:1260px;top:988px;width:21px;height:16px;background:#225500;box-shadow:inset 0 0 0 1px rgba(0,0,0,.13)"></div><div class="a" style="left:1282px;top:988px;width:21px;height:16px;background:#338000;box-shadow:inset 0 0 0 1px rgba(0,0,0,.13)"></div><div class="a" style="left:1304px;top:988px;width:21px;height:16px;background:#44aa00;box-shadow:inset 0 0 0 1px rgba(0,0,0,.13)"></div><div class="a" style="left:1326px;top:988px;width:21px;height:16px;background:#55d400;box-shadow:inset 0 0 0 1px rgba(0,0,0,.13)"></div><div class="a" style="left:1348px;top:988px;width:21px;height:16px;background:#66ff00;box-shadow:inset 0 0 0 1px rgba(0,0,0,.13)"></div><div class="a" style="left:1370px;top:988px;width:21px;height:16px;background:#7fff2a;box-shadow:inset 0 0 0 1px rgba(0,0,0,.13)"></div><div class="a" style="left:1392px;top:988px;width:21px;height:16px;background:#99ff55;box-shadow:inset 0 0 0 1px rgba(0,0,0,.13)"></div><div class="a" style="left:1414px;top:988px;width:21px;height:16px;background:#b3ff80;box-shadow:inset 0 0 0 1px rgba(0,0,0,.13)"></div><div class="a" style="left:1436px;top:988px;width:21px;height:16px;background:#ccffaa;box-shadow:inset 0 0 0 1px rgba(0,0,0,.13)"></div><div class="a" style="left:1458px;top:988px;width:21px;height:16px;background:#e5ffd5;box-shadow:inset 0 0 0 1px rgba(0,0,0,.13)"></div><div class="a" style="left:1480px;top:988px;width:21px;height:16px;background:#17280b;box-shadow:inset 0 0 0 1px rgba(0,0,0,.13)"></div><div class="a" style="left:1502px;top:988px;width:21px;height:16px;background:#2d5016;box-shadow:inset 0 0 0 1px rgba(0,0,0,.13)"></div><div class="a" style="left:1524px;top:988px;width:21px;height:16px;background:#447821;box-shadow:inset 0 0 0 1px rgba(0,0,0,.13)"></div><div class="a" style="left:1546px;top:988px;width:21px;height:16px;background:#5aa02c;box-shadow:inset 0 0 0 1px rgba(0,0,0,.13)"></div><div class="a" style="left:1568px;top:988px;width:21px;height:16px;background:#71c837;box-shadow:inset 0 0 0 1px rgba(0,0,0,.13)"></div><div class="a" style="left:1590px;top:988px;width:21px;height:16px;background:#8dd35f;box-shadow:inset 0 0 0 1px rgba(0,0,0,.13)"></div><div class="a" style="left:1612px;top:988px;width:21px;height:16px;background:#aade87;box-shadow:inset 0 0 0 1px rgba(0,0,0,.13)"></div><div class="a" style="left:1634px;top:988px;width:21px;height:16px;background:#c6e9af;box-shadow:inset 0 0 0 1px rgba(0,0,0,.13)"></div><div class="a" style="left:1656px;top:988px;width:21px;height:16px;background:#e3f4d7;box-shadow:inset 0 0 0 1px rgba(0,0,0,.13)"></div><div class="a" style="left:1678px;top:988px;width:21px;height:16px;background:#1f241c;box-shadow:inset 0 0 0 1px rgba(0,0,0,.13)"></div><div class="a" style="left:1700px;top:988px;width:21px;height:16px;background:#3e4837;box-shadow:inset 0 0 0 1px rgba(0,0,0,.13)"></div><div class="a" style="left:1722px;top:988px;width:21px;height:16px;background:#5d6c53;box-shadow:inset 0 0 0 1px rgba(0,0,0,.13)"></div><div class="a" style="left:1744px;top:988px;width:21px;height:16px;background:#7c916f;box-shadow:inset 0 0 0 1px rgba(0,0,0,.13)"></div><div class="a" style="left:1766px;top:988px;width:21px;height:16px;background:#9dac93;box-shadow:inset 0 0 0 1px rgba(0,0,0,.13)"></div><div class="a" style="left:1788px;top:988px;width:21px;height:16px;background:#bec8b7;box-shadow:inset 0 0 0 1px rgba(0,0,0,.13)"></div><div class="a" style="left:1810px;top:988px;width:21px;height:16px;background:#dee3db;box-shadow:inset 0 0 0 1px rgba(0,0,0,.13)"></div><div class="a" style="left:1832px;top:988px;width:21px;height:16px;background:#002b00;box-shadow:inset 0 0 0 1px rgba(0,0,0,.13)"></div><svg style="left:1857px;top:983px" width="14" height="8"><path d="M1.200 7.300L7 1.800L12.800 7.300" stroke="#8a8a8a" stroke-width="1.900" fill="none"></path></svg><svg style="left:1880px;top:982px" width="14" height="8"><path d="M1.200 1.700L7 7.200L12.800 1.700" stroke="#eeeeec" stroke-width="1.900" fill="none"></path></svg><svg style="left:1901px;top:985px" width="15" height="12"><path d="M0.5 1H14.5M0.5 6H14.5M0.5 11H14.5" stroke="#eeeeec" stroke-width="2"></path></svg><div class="a" style="left:0;top:1005px;width:1920px;height:34px;background:#353535"></div><div class="t" style="left:0;width:57px;text-align:right;top:1006px;letter-spacing:0">Fond :</div><div class="t" style="left:0;width:57px;text-align:right;top:1023px;letter-spacing:.2px">Contour :</div><div class="a" style="left:76px;top:1006px;width:50px;height:16px;border-radius:2px;background:#3200ee"></div><div class="t" style="left:76px;top:1023px;font-weight:bold">Indéfini</div><div class="t" style="left:134px;top:1023px">0,146</div><div class="t" style="left:174px;top:1015px;word-spacing:-1px">O :</div><div class="entry" style="left:194px;top:1006px;width:72px;height:34px"></div><div class="t" style="left:202px;top:1015.0px;font-size:13.33px;letter-spacing:.2px">100</div><div class="a" style="left:231px;top:1007px;width:1px;height:32px;background:#282828"></div><div class="a" style="left:248px;top:1007px;width:1px;height:32px;background:#282828"></div><div class="a" style="left:234px;top:1022.0px;width:12px;height:2px;background:#eeeeec"></div><div class="a" style="left:251px;top:1022.0px;width:12px;height:2px;background:#5a5a5a"></div><div class="a" style="left:256px;top:1017.0px;width:2px;height:12px;background:#5a5a5a"></div><div class="a" style="left:277px;top:1015px;width:3px;height:16px;background:#3b82f0"></div><div class="t" style="left: 286px; top: 1015px; letter-spacing: -0.496px;">Layer 1</div><svg style="left:349px;top:1015px" width="16" height="16"><path d="M1 9.5C3 5.5 6 4.5 8 4.5S13 5.5 15 9.5C13 13 10.5 14 8 14S3 13 1 9.5Z" fill="none" stroke="#eeeeec" stroke-width="1.7"></path><circle cx="8" cy="9.3" r="2.3" fill="#eeeeec"></circle><path d="M4 2.5L5 4.3M8 1.5V3.5M12 2.5L11 4.3" stroke="#eeeeec" stroke-width="1.5"></path></svg><svg style="left:387px;top:1014px" width="16" height="16"><rect x="1" y="7" width="9" height="8" fill="#eeeeec"></rect><path d="M8 7V4.5A2.6 2.6 0 0 1 13.2 4.5V6.5" fill="none" stroke="#eeeeec" stroke-width="1.8"></path></svg><div class="a" style="left:411px;top:1009px;width:1px;height:26px;background:#303030"></div><div class="t" style="left: 419px; top: 1015px; letter-spacing: 0.123px;">Maintenez <b>Alt</b> tout en survolant l'élément pour le mettre en surbrillance, maintenez <b>Maj</b> et cliquez pour tout cacher/verrouiller.</div><svg style="left:1498px;top:1017px" width="8" height="12"><path d="M7 0.5L0.5 6L7 11.5Z" fill="#777"></path></svg><div class="entry" style="left:1521px;top:1006px;width:35px;height:34px;background:#323232"></div><svg style="left:1532px;top:1020px" width="12" height="6"><path d="M0 0H12L6 6Z" fill="#8d8d8d"></path></svg><svg style="left:1570px;top:1017px" width="8" height="12"><path d="M0.5 0.5L7 6L0.5 11.5Z" fill="#777"></path></svg><div class="a" style="left:1592px;top:1009px;width:1px;height:26px;background:#303030"></div><div class="t" style="left:1599px;top:1006px;word-spacing:-1px;letter-spacing:.2px">X :</div><div class="t" style="left:1599px;top:1022px;word-spacing:-1px;letter-spacing:.2px">Y :</div><div class="t" style="left:1600px;width:64px;text-align:right;top:1006px;letter-spacing:.4px">47,50</div><div class="t" style="left:1600px;width:64px;text-align:right;top:1022px;letter-spacing:.4px">53,39</div><div class="t" style="left:1676px;top:1015px;word-spacing:-1px;letter-spacing:.2px">Z :</div><div class="entry" style="left:1695px;top:1006px;width:89px;height:34px"></div><div class="t" style="left:1704.5px;top:1015.0px;font-size:13.33px;letter-spacing:.2px">522%</div><div class="a" style="left:1748px;top:1007px;width:1px;height:32px;background:#282828"></div><div class="a" style="left:1765px;top:1007px;width:1px;height:32px;background:#282828"></div><div class="a" style="left:1751px;top:1022.0px;width:12px;height:2px;background:#eeeeec"></div><div class="a" style="left:1768px;top:1022.0px;width:12px;height:2px;background:#eeeeec"></div><div class="a" style="left:1773px;top:1017.0px;width:2px;height:12px;background:#eeeeec"></div><div class="t" style="left:1794px;top:1015px;word-spacing:-1px;letter-spacing:.2px">R :</div><div class="entry" style="left:1812px;top:1006px;width:97px;height:34px"></div><div class="t" style="left:1828px;top:1015.0px;font-size:13.33px;letter-spacing:.2px">0,00°</div><div class="a" style="left:1875px;top:1007px;width:1px;height:32px;background:#282828"></div><div class="a" style="left:1892px;top:1007px;width:1px;height:32px;background:#282828"></div><div class="a" style="left:1878px;top:1022.0px;width:12px;height:2px;background:#eeeeec"></div><div class="a" style="left:1895px;top:1022.0px;width:12px;height:2px;background:#eeeeec"></div><div class="a" style="left:1900px;top:1017.0px;width:2px;height:12px;background:#eeeeec"></div><div class="a" style="left:0;top:1039px;width:1920px;height:41px;background:#1e1e22"></div><div class="a" style="left:1910px;top:1041px;width:10px;height:39px;background:#2b2b2f"></div><svg style="left:5px;top:1044px" width="34" height="32"><circle cx="17" cy="15.800" r="14.600" fill="none" stroke="#f0f0f0" stroke-width="2.700"></circle><path d="M10 9.5V19A3.5 3.5 0 0 0 13.5 22.5H21A3.5 3.5 0 0 0 24.5 19V14.5A2.2 2.2 0 0 0 20 14.5V18M20 14.5A2.2 2.2 0 0 0 15.5 14.5V18" fill="none" stroke="#f0f0f0" stroke-width="2.2" stroke-linecap="round" stroke-linejoin="round"></path></svg><div class="a" style="left:52px;top:1044px;width:1px;height:32px;background:#2c2c30"></div><div class="a" style="left:281px;top:1040px;width:38px;height:40px;background:#2a2a2f"></div><div class="a" style="left:61px;top:1078px;width:38px;height:2px;background:#1f9ede"></div><div class="a" style="left:105px;top:1078px;width:38px;height:2px;background:#1f9ede"></div><div class="a" style="left:149px;top:1078px;width:38px;height:2px;background:#1f9ede"></div><div class="a" style="left:193px;top:1078px;width:38px;height:2px;background:#1f9ede"></div><div class="a" style="left:237px;top:1078px;width:38px;height:2px;background:#1f9ede"></div><div class="a" style="left:281px;top:1078px;width:38px;height:2px;background:#1f9ede"></div><div class="a" style="left:325px;top:1078px;width:38px;height:2px;background:#1f9ede"></div><svg style="left:65px;top:1044px" width="30" height="30"><path d="M1 4A2 2 0 0 1 3 2H11L14 5H27A2 2 0 0 1 29 7V26A2 2 0 0 1 27 28H3A2 2 0 0 1 1 26Z" fill="#e9b456"></path><path d="M1 9H29V26A2 2 0 0 1 27 28H3A2 2 0 0 1 1 26Z" fill="#f9c873"></path><path d="M3 6.5H27" stroke="#fbe3b4" stroke-width="1"></path></svg><svg style="left:109px;top:1044px" width="30" height="30"><rect x="1" y="1" width="28" height="28" rx="6" fill="#3c5aa8"></rect><rect x="1" y="1" width="28" height="25" rx="6" fill="#5b8be0"></rect><rect x="5" y="7" width="20" height="14" rx="1.5" fill="#f4f4f4"></rect><path d="M5.5 8L15 15.5L24.5 8M5.5 20.5L12 13.5M24.5 20.5L18 13.5" stroke="#b9b9b9" stroke-width="1" fill="none"></path></svg><svg style="left:153px;top:1044px" width="30" height="30"><defs><linearGradient id="ffg" x1="0" y1="0" x2="0" y2="1"><stop offset="0" stop-color="#f26a3d"></stop><stop offset="1" stop-color="#f03a5b"></stop></linearGradient></defs><rect x="1" y="1" width="28" height="28" rx="7" fill="#c93148"></rect><rect x="1" y="1" width="28" height="26.500" rx="7" fill="url(#ffg)"></rect><path d="M8.500 9.500C6.500 12 6 15 6.500 17.500C7.500 21.500 11 24.200 15 24.200C20 24.200 24 20.500 24 15.500C24 12 22.500 9.500 20 7.500C20.500 9 20.500 10 20 11C19 8.500 17 7 14.500 6C15.500 8 14.500 9.500 13 10.500C11.500 11.500 10.500 12.500 11 14.500C9.500 14 9 12.500 9.500 11C9 10.500 8.700 10 8.500 9.500Z" fill="#fff"></path><path d="M12.500 13.500C14 13 16 13.200 17.200 14.500C18.500 16 18.300 18.500 16.800 19.800C15.300 21 13 20.800 11.800 19.500C13.500 19.800 14.800 19 15 17.800C15.200 16.500 14.200 15.500 13 15.500C13.500 15 13 14 12.500 13.500Z" fill="#f2484f"></path></svg><svg style="left:197px;top:1044px" width="30" height="30"><rect x="1" y="1" width="28" height="28" rx="6" fill="#2e2e2e"></rect><rect x="1.500" y="1.500" width="27" height="26" rx="6" fill="#141414"></rect><text x="3.800" y="11.300" font-family="Liberation Mono" font-size="9.500" font-weight="bold" fill="#e8e8e8">$</text><rect x="10.500" y="10.500" width="5.500" height="1.300" fill="#e8e8e8"></rect></svg><svg style="left:241px;top:1044px" width="30" height="30"><rect x="1" y="1" width="28" height="28" rx="6" fill="#1f86c4"></rect><rect x="1" y="1" width="28" height="26" rx="6" fill="#2aa3e2"></rect><path d="M5.5 14.5L23.5 7.3L20.6 22.2L15 18L12.3 20.6L12.8 16.3L20.3 10L10.7 15.8Z" fill="#fff"></path></svg><svg style="left:285px;top:1044px" width="30" height="30"><rect x="1" y="1" width="28" height="28" rx="6" fill="#b9b4a7"></rect><rect x="1" y="1" width="28" height="26" rx="6" fill="#e6e2d8"></rect><path d="M15 5.5L24.5 15.2C25.3 16.2 24.5 17 23.5 17H21L23 19.5L20.5 20.5L18 18.5L16.5 20L15 18.5L13.5 20.5L11 19L9 20.5L7.5 19L10 17H6.5C5.5 17 4.7 16.2 5.5 15.2Z" fill="#1a1a1a"></path><path d="M15 7.2L18.3 10.6L16.8 11.8L15.2 10.4L13.5 12L12 10.3Z" fill="#e6e2d8"></path><ellipse cx="15" cy="23" rx="4" ry="1.2" fill="#1a1a1a"></ellipse><ellipse cx="8.5" cy="22.3" rx="1.8" ry=".8" fill="#1a1a1a"></ellipse><ellipse cx="21.5" cy="22.6" rx="1.5" ry=".7" fill="#1a1a1a"></ellipse></svg><div class="a" style="left:282px;top:1042px;width:16px;height:14px;border-radius:7px;background:#1f9ede;color:#fff;font-size:10px;font-weight:bold;text-align:center;line-height:14px">4</div><svg style="left:329px;top:1044px" width="30" height="30"><rect x="1" y="1" width="28" height="28" rx="6" fill="#b5b5b2"></rect><rect x="1" y="1" width="28" height="26" rx="6" fill="#dcdcd9"></rect><text x="3.500" y="12.300" font-family="Liberation Sans" font-size="10" fill="#6a6a6a">@</text><text x="4.500" y="27" font-family="Liberation Sans" font-size="12.500" fill="#6a6a6a">2</text></svg><svg style="left:1619px;top:1049px" width="22" height="22"><circle cx="11" cy="11" r="10.6" fill="#4fae24"></circle><path d="M5 11.5L9.2 15.5L17.2 7" stroke="#fff" stroke-width="2.6" fill="none"></path></svg><svg style="left:1653px;top:1051px" width="14" height="18"><ellipse cx="7" cy="9" rx="5.6" ry="8" fill="#e9e9e9"></ellipse><path d="M4.2 5.8L9.5 11.3L7 13.8V4.2L9.5 6.7L4.2 12.2" stroke="#1e1e22" stroke-width="1.1" fill="none"></path></svg><svg style="left:1678px;top:1051px" width="16" height="18"><path d="M1.8 4H14.2V17H1.8Z" fill="none" stroke="#eeeeec" stroke-width="1.8"></path><rect x="5" y="1" width="6" height="4.5" rx="1" fill="#eeeeec"></rect><rect x="7" y="7" width="2" height="5" fill="#eeeeec"></rect><rect x="7" y="13.2" width="2" height="2" fill="#eeeeec"></rect></svg><svg style="left:1703px;top:1051px" width="20" height="19"><path d="M9 1L2 3.5V9C2 13 5 16 9 17.5C13 16 16 13 16 9V3.5Z" fill="none" stroke="#eeeeec" stroke-width="1.6"></path><path d="M9 3.5L4.3 5.2V9C4.3 12 6.3 14 9 15.2Z" fill="#eeeeec"></path><circle cx="14.5" cy="15" r="3.2" fill="#f37329"></circle></svg><svg style="left:1729px;top:1051px" width="20" height="18"><path d="M3 8.5L19 1.5L15.5 16L11 11.5L8.5 14V10.5L15.5 5L7 9.8Z" fill="#eeeeec"></path><circle cx="3.8" cy="14.8" r="2.2" fill="#d40000"></circle></svg><svg style="left:1758px;top:1052px" width="18" height="17"><rect x="4" y="1" width="10" height="3" fill="#eeeeec"></rect><rect x="1" y="5" width="16" height="8" rx="2" fill="#eeeeec"></rect><rect x="4" y="10" width="10" height="6" fill="#eeeeec" stroke="#1e1e22" stroke-width="1.4"></rect></svg><svg style="left:1786px;top:1052px" width="18" height="16"><path d="M1.5 5.5A11 11 0 0 1 16.5 5.5" stroke="#7a7a7c" stroke-width="1.8" fill="none"></path><path d="M4 8.5A7.2 7.2 0 0 1 14 8.5" stroke="#eeeeec" stroke-width="1.8" fill="none"></path><path d="M6.3 11.2A4 4 0 0 1 11.7 11.2" stroke="#eeeeec" stroke-width="1.8" fill="none"></path><circle cx="9" cy="14" r="1.5" fill="#eeeeec"></circle></svg><svg style="left:1814px;top:1052px" width="20" height="16"><path d="M1 5.5H4L8.5 1.5V14.5L4 10.5H1Z" fill="#eeeeec"></path><path d="M11.5 5.5L16.5 10.5M16.5 5.5L11.5 10.5" stroke="#eeeeec" stroke-width="1.7"></path></svg><svg style="left:1844px;top:1050px" width="18" height="20"><path d="M2 4H11.5V17H2Z" fill="none" stroke="#eeeeec" stroke-width="1.8"></path><rect x="4.5" y="1" width="4.5" height="3" fill="#eeeeec"></rect><path d="M8 6.5L5 11.5H7.5L6 15.5" stroke="#eeeeec" stroke-width="1.3" fill="none"></path><path d="M13.5 9.5L10 15H13L11.5 19.5L16.5 13.5H13.8L15.5 9.5Z" fill="#8a8a8c"></path></svg><div class="t" style="left:1871px;top:1052px;font-weight:bold;font-size:13.6px;color:#f2f2f2">11:49</div><div class="a" style="left:455px;top:55px;width:367px;height:580px;background:#2f2f2f;border:1px solid #151515;border-bottom-color:#1f1f1f;box-shadow:0 1px 2px rgba(0,0,0,.07)"><div class="a" style="left:0;top:0;right:0;bottom:0"><div class="mi dis" style="top:0px"><span class="l" style="letter-spacing: 0.073px;">Extension précédente</span><span class="k">Alt+Q</span></div><div class="mi dis" style="top:24px"><span class="l" style="letter-spacing: -0.018px;">Paramètres de l'extension précédente...</span><span class="k">Maj+Alt+Q</span></div><div class="mi " style="top:48px"><span class="l" style="letter-spacing: -0.171px;">Galerie des extensions…</span></div><div class="a" style="left:0;right:0;top:72px;height:1px;background:#282828"></div><div class="mi " style="top:73px"><span class="l" style="letter-spacing: -0.098px;">Couleur</span><span class="ar"></span></div><div class="mi " style="top:97px"><span class="l" style="letter-spacing: 0.03px;">Cutlings</span><span class="ar"></span></div><div class="mi " style="top:121px"><span class="l" style="letter-spacing: 0.244px;">Document</span><span class="ar"></span></div><div class="mi " style="top:145px"><span class="l" style="letter-spacing: 0.203px;">Exporter</span><span class="ar"></span></div><div class="mi " style="top:169px"><span class="l" style="letter-spacing: -0.042px;">Gcodetools</span><span class="ar"></span></div><div class="mi " style="top:193px"><span class="l" style="letter-spacing: -0.011px;">Générer à partir du chemin</span><span class="ar"></span></div><div class="mi " style="top:217px"><span class="l" style="letter-spacing: -0.286px;">Images</span><span class="ar"></span></div><div class="mi " style="top:241px"><span class="l" style="letter-spacing: -0.109px;">Images matricielles</span><span class="ar"></span></div><div class="mi " style="top:265px"><span class="l" style="letter-spacing: 0.19px;">Inkcut</span><span class="ar"></span></div><div class="mi sel" style="top:289px"><span class="l" style="letter-spacing: 0.117px;">Ink/Stitch</span><span class="ar"></span></div><div class="mi " style="top:313px"><span class="l" style="letter-spacing: -0.307px;">JessyInk</span><span class="ar"></span></div><div class="mi " style="top:337px"><span class="l" style="letter-spacing: -0.096px;">Laserengraver</span><span class="ar"></span></div><div class="mi " style="top:361px"><span class="l" style="letter-spacing: 0.046px;">Modifier les chemins</span><span class="ar"></span></div><div class="mi " style="top:385px"><span class="l" style="letter-spacing: 0.019px;">Organiser</span><span class="ar"></span></div><div class="mi " style="top:409px"><span class="l" style="letter-spacing: -0.256px;">Rendu</span><span class="ar"></span></div><div class="mi " style="top:433px"><span class="l" style="letter-spacing: -0.549px;">Styles</span><span class="ar"></span></div><div class="mi " style="top:457px"><span class="l" style="letter-spacing: 0.108px;">Texte</span><span class="ar"></span></div><div class="mi " style="top:481px"><span class="l" style="letter-spacing: 0.122px;">Typographie</span><span class="ar"></span></div><div class="mi " style="top:505px"><span class="l" style="letter-spacing: 0.009px;">Visualisation de chemin</span><span class="ar"></span></div><div class="mi " style="top:529px"><span class="l" style="letter-spacing: -0.391px;">Web</span><span class="ar"></span></div><div class="a" style="left:0;right:0;top:553px;height:1px;background:#282828"></div><div class="mi " style="top:554px"><span class="l" style="letter-spacing: -0.17px;">Gérer les extensions…</span></div></div></div><div class="a" style="left:818px;top:344px;width:390px;height:362px;background:#2f2f2f;border:1px solid #151515;border-bottom-color:#1f1f1f;box-shadow:0 1px 2px rgba(0,0,0,.07)"><div class="a" style="left:0;top:0;right:0;bottom:0"><div class="mi " style="top:0px"><span class="l" style="letter-spacing: 0.297px;">A propos</span></div><div class="mi " style="top:24px"><span class="l" style="letter-spacing: 0.015px;">Commandes</span><span class="ar"></span></div><div class="mi " style="top:48px"><span class="l" style="letter-spacing: 0.133px;">Édition</span><span class="ar"></span></div><div class="mi " style="top:72px"><span class="l" style="letter-spacing: -0.013px;">Gestion des couleurs de fil</span><span class="ar"></span></div><div class="mi " style="top:96px"><span class="l" style="letter-spacing: -0.138px;">Gestion des polices</span><span class="ar"></span></div><div class="mi " style="top:120px"><span class="l" style="letter-spacing: 0.011px;">Installer des compléments pour Inkscape…</span></div><div class="mi " style="top:144px"><span class="l" style="letter-spacing: 0.26px;">Lettrage</span><span class="ar"></span></div><div class="mi " style="top:168px"><span class="l" style="letter-spacing: -0.161px;">Outils : Remplissage</span><span class="ar"></span></div><div class="mi " style="top:192px"><span class="l" style="letter-spacing: -0.133px;">Outils : Satin</span><span class="ar"></span></div><div class="mi " style="top:216px"><span class="l" style="letter-spacing: -0.008px;">Outils : Trait</span><span class="ar"></span></div><div class="mi sel" style="top:240px"><span class="l" style="letter-spacing: -0.019px;">Paramètres</span><span class="k">Maj+Ctrl+P</span></div><div class="mi " style="top:264px"><span class="l" style="letter-spacing: -0.107px;">Préférences</span></div><div class="mi " style="top:288px"><span class="l" style="letter-spacing: 0.038px;">Résolution de problèmes</span><span class="ar"></span></div><div class="mi " style="top:312px"><span class="l" style="letter-spacing: -0.035px;">Segmentation Richelieu…</span></div><div class="mi " style="top:336px"><span class="l" style="letter-spacing: 0.079px;">Visualiser et exporter</span><span class="ar"></span></div></div></div><div class="a" style="left:919px;top:613px;width:188px;height:44px;background:rgba(8,8,8,.94);border-radius:7px;border:1px solid #303030"></div><div class="t" style="left: 933px; top: 627px; color: rgb(255, 255, 255); letter-spacing: 0.206px;">Adapt embroidery settings</div></body></html>
